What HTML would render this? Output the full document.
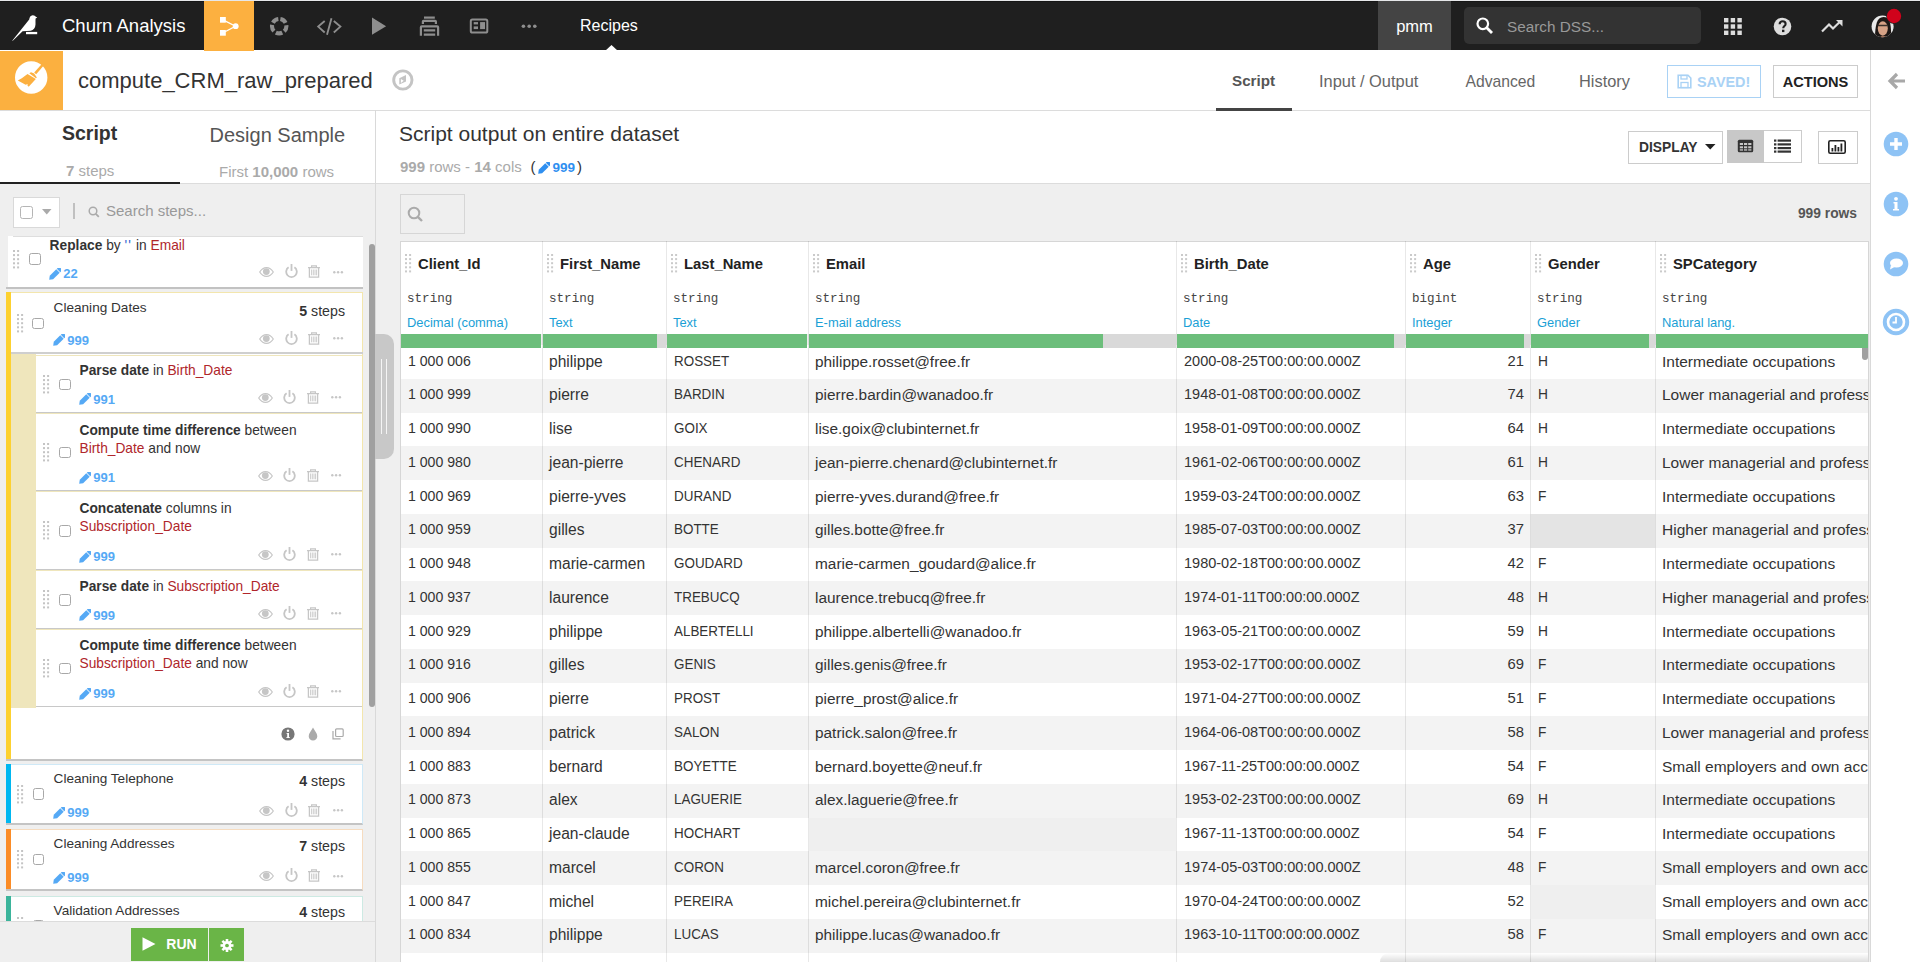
<!DOCTYPE html>
<html><head><meta charset="utf-8">
<style>
*{box-sizing:border-box;margin:0;padding:0}
html,body{width:1920px;height:962px;overflow:hidden;background:#fff;font-family:"Liberation Sans",sans-serif;color:#333}
.a{position:absolute}
.t{position:absolute;white-space:nowrap}
/* topbar */
#top{position:absolute;left:0;top:0;width:1920px;height:50px;background:#1f1f1f}
/* table */
.row{position:absolute;left:401px;width:1467px}
.cell{position:absolute;padding-left:6px;font-size:14.8px;color:#333;white-space:nowrap;overflow:hidden}
.cell.num{text-align:right;padding-right:6px;padding-left:0}
.hname{position:absolute;height:40px;line-height:44px;padding-left:18px;font-size:14.8px;font-weight:bold;color:#222;white-space:nowrap}
.grip{position:absolute;left:7px;top:14px;width:6px;height:18px;background-image:radial-gradient(circle,#c8c8c8 0.9px,transparent 1.1px);background-size:3px 3px}
.htype{position:absolute;font-family:"Liberation Mono",monospace;font-size:12.6px;color:#444;white-space:nowrap}
.hmean{position:absolute;font-size:12.9px;color:#1a9fd6;white-space:nowrap}
/* steps */
.card{position:absolute;background:#fff;border-bottom:2px solid #cfcfcf}
.drag{position:absolute;width:7px;height:19px;background-image:radial-gradient(circle,#c8c8c8 0.9px,transparent 1.1px);background-size:3.3px 3.3px}
.cb{position:absolute;width:11.5px;height:11.5px;border:1px solid #a8a8a8;border-radius:2.5px;background:#fff}
.stxt{position:absolute;font-size:14px;color:#333;white-space:nowrap;line-height:19px}
.stxt b{color:#333}
.col{color:#b0262b}
.pen{position:absolute;font-size:13.5px;font-weight:bold;color:#55a6f0;white-space:nowrap}
.acts{position:absolute;width:90px;height:14px}
.steps{position:absolute;font-size:14.5px;color:#333;white-space:nowrap}
</style></head><body>

<!-- TOPBAR -->
<div id="top"></div>
<div class="a" style="left:0;top:0;width:1920px;height:1px;background:#e6e7e9"></div>
<div class="a" style="left:0;top:1px;width:1920px;height:1px;background:#161616"></div>
<!-- bird logo -->
<svg class="a" style="left:8px;top:10px" width="36" height="34" viewBox="0 0 36 34">
<path d="M4.2 30.8 L21.2 9.6 C21.4 7.3 22.6 5.4 24.7 5.3 C26.2 5.2 27.3 6.1 27.8 6.7 L29.3 7.4 L27.6 8.5 C27.4 10.2 27.6 12 27.5 14.5 C27.3 18.2 25.4 20.3 22.8 20.8 L14.6 21.3 L4.8 30.8 Z" fill="#fff"/>
<rect x="18" y="21.9" width="11.2" height="2.3" fill="#fff"/>
</svg>
<div class="t" style="left:62px;top:14px;font-size:18.5px;color:#fff;line-height:24px">Churn Analysis</div>
<div class="a" style="left:204px;top:1px;width:50px;height:50px;background:#fcb040"></div>
<svg class="a" style="left:218px;top:15px" width="22" height="22" viewBox="0 0 22 22">
<rect x="2" y="2" width="5.8" height="5.7" fill="#fff"/><rect x="2" y="15" width="5.8" height="5.7" fill="#fff"/>
<circle cx="17.7" cy="11.2" r="2.9" fill="#fff"/>
<path d="M7 5.8 L17.5 11.2 L7 16.8" stroke="#fff" stroke-width="1.3" fill="none"/>
</svg>
<!-- nav icons -->
<svg class="a" style="left:269px;top:16px" width="21" height="21" viewBox="0 0 21 21">
<g transform="translate(10.2 10.2)"><circle r="7.2" stroke="#8e8e8e" stroke-width="4.1" fill="none" stroke-dasharray="6.65 2.4" stroke-dashoffset="7.85" transform="rotate(-90)"/></g>
</svg>
<svg class="a" style="left:316px;top:17px" width="26" height="20" viewBox="0 0 26 20">
<path d="M8.7 4 L2.2 9.6 L8.7 15.5 M17.8 4 L24.4 9.6 L17.8 15.5 M15.5 1.2 L11 17.8" stroke="#8e8e8e" stroke-width="1.85" fill="none"/>
</svg>
<svg class="a" style="left:372px;top:17px" width="15" height="19" viewBox="0 0 15 19"><path d="M0 0.5 L14.1 9.2 L0 17.8 Z" fill="#8e8e8e"/></svg>
<svg class="a" style="left:419px;top:16px" width="21" height="21" viewBox="0 0 21 21">
<g stroke="#8e8e8e" stroke-width="2.2" fill="none">
<path d="M5 1.6 H15.8"/>
<path d="M3.9 8 V5.5 Q3.9 4.8 4.6 4.8 H16.2 Q16.9 4.8 16.9 5.5 V8"/>
<path d="M1.9 19.8 V11.3 Q1.9 10.4 2.8 10.4 H18.2 Q19.1 10.4 19.1 11.3 V19.8"/>
<path d="M4.8 14.4 H16.2 M4.8 18.6 H16.2"/>
</g></svg>
<svg class="a" style="left:469px;top:18px" width="21" height="17" viewBox="0 0 21 17">
<rect x="1.8" y="1.6" width="16.5" height="13" rx="1.6" stroke="#8e8e8e" stroke-width="2" fill="none"/>
<g fill="#8e8e8e"><rect x="4.7" y="4.1" width="4.3" height="2.3"/><rect x="4.7" y="8.4" width="4.3" height="2.7"/><rect x="11.1" y="4.1" width="4.9" height="7"/></g>
</svg>
<svg class="a" style="left:521px;top:24px" width="17" height="5" viewBox="0 0 17 5">
<circle cx="2.4" cy="2.2" r="1.8" fill="#8e8e8e"/><circle cx="8.2" cy="2.2" r="1.8" fill="#8e8e8e"/><circle cx="13.8" cy="2.2" r="1.8" fill="#8e8e8e"/>
</svg>
<div class="t" style="left:580px;top:14px;font-size:16px;color:#fff;line-height:24px">Recipes</div>
<svg class="a" style="left:605px;top:45px" width="13" height="6" viewBox="0 0 13 6"><path d="M0 6 L6.5 0 L13 6 Z" fill="#fff"/></svg>
<!-- right topbar -->
<div class="a" style="left:1378px;top:1px;width:73px;height:49px;background:#444"></div>
<div class="t" style="left:1378px;top:14px;width:73px;text-align:center;font-size:16.5px;color:#fff;line-height:24px">pmm</div>
<div class="a" style="left:1464px;top:7px;width:237px;height:37px;background:#333;border-radius:5px"></div>
<svg class="a" style="left:1476px;top:17px" width="18" height="17" viewBox="0 0 18 17">
<circle cx="6.8" cy="6.8" r="5.3" stroke="#fff" stroke-width="2.2" fill="none"/><path d="M10.5 10.5 L16 16" stroke="#fff" stroke-width="2.8"/>
</svg>
<div class="t" style="left:1507px;top:15px;font-size:15.3px;color:#999;line-height:24px">Search DSS...</div>
<svg class="a" style="left:1724px;top:18px" width="18" height="17" viewBox="0 0 18 17">
<g fill="#ddd"><rect x="0" y="0" width="4.4" height="4.4"/><rect x="6.7" y="0" width="4.4" height="4.4"/><rect x="13.4" y="0" width="4.4" height="4.4"/>
<rect x="0" y="6.3" width="4.4" height="4.4"/><rect x="6.7" y="6.3" width="4.4" height="4.4"/><rect x="13.4" y="6.3" width="4.4" height="4.4"/>
<rect x="0" y="12.6" width="4.4" height="4.4"/><rect x="6.7" y="12.6" width="4.4" height="4.4"/><rect x="13.4" y="12.6" width="4.4" height="4.4"/></g>
</svg>
<svg class="a" style="left:1773px;top:17px" width="19" height="19" viewBox="0 0 19 19">
<circle cx="9.5" cy="9.5" r="8.8" fill="#ddd"/>
<path d="M6.6 7.3 C6.6 5.4 8 4.3 9.6 4.3 C11.3 4.3 12.6 5.4 12.6 6.9 C12.6 9 10.2 9.1 10.2 11.2" stroke="#1f1f1f" stroke-width="2.1" fill="none"/>
<rect x="9" y="12.7" width="2.4" height="2.4" fill="#1f1f1f"/>
</svg>
<svg class="a" style="left:1821px;top:19px" width="23" height="14" viewBox="0 0 23 14">
<path d="M1 12.5 L8 5.5 L12 9.5 L20 1.8" stroke="#ddd" stroke-width="2.2" fill="none"/><path d="M15 1 H21.5 V7.5 Z" fill="#ddd"/>
</svg>
<svg class="a" style="left:1866px;top:6px" width="40" height="36" viewBox="0 0 40 36">
<defs><clipPath id="av"><circle cx="16.5" cy="20.4" r="10.9"/></clipPath></defs>
<circle cx="16.5" cy="20.4" r="10.9" fill="#e9e9e9"/>
<g clip-path="url(#av)">
<path d="M9 33 C9 20 10.5 11 17.5 11 C24 11 25.5 18 25 33 Z" fill="#1d1715"/>
<ellipse cx="16.8" cy="22.5" rx="5" ry="7.2" fill="#d6a286"/>
<path d="M11.8 19.6 H22" stroke="#3b302b" stroke-width="1.5"/>
<path d="M13 32 C14 30 19 29.5 22 32 Z" fill="#c98d70"/>
<path d="M22 12 C25 14 27 20 26 33 L28 33 L28 10 Z" fill="#e6e6e6"/>
</g>
<circle cx="28" cy="10" r="7.9" fill="#1f1f1f"/>
<circle cx="28" cy="10" r="7.2" fill="#d0021b"/>
</svg>
<!-- HEADER 2 -->
<div class="a" style="left:0;top:110px;width:1870px;height:1px;background:#dcdcdc"></div>
<div class="a" style="left:0;top:51px;width:63px;height:59px;background:#fbb040"></div>
<svg class="a" style="left:10px;top:58px" width="42" height="40" viewBox="0 0 42 40">
<circle cx="21.2" cy="19.5" r="16.2" fill="#fff"/>
<path d="M33 6.5 L25.2 15.4" stroke="#fcb040" stroke-width="2.6"/>
<path d="M19.3 15.2 L21 14.2 L24.2 15.6 L26.8 19.6 L26 20.3 Z" fill="#fcb040"/>
<path d="M17.5 16.1 L25.8 21.1 L18.7 28.8 L17.3 27.3 L17.8 26 L15.6 26.8 L7.8 22.4 L11.8 20.3 Z" fill="#fcb040"/>
</svg>
<div class="t" style="left:78px;top:66px;font-size:22px;color:#333;line-height:30px">compute_CRM_raw_prepared</div>
<svg class="a" style="left:388px;top:66px" width="30" height="28" viewBox="0 0 30 28">
<circle cx="14.85" cy="14" r="9.15" stroke="#c4c4c4" stroke-width="2.9" fill="none"/>
<path d="M11.3 12.2 L18 9 L18 15.4 L11.3 18.6 Z M12.9 13.1 L12.9 16.9 L15.7 14.8 Z" fill="#c4c4c4" fill-rule="evenodd"/>
</svg>
<div class="t" style="left:1232px;top:69px;font-size:15.2px;font-weight:bold;color:#555;line-height:24px">Script</div>
<div class="a" style="left:1216px;top:108px;width:76px;height:3px;background:#444"></div>
<div class="t" style="left:1319px;top:69px;font-size:16.4px;color:#666;line-height:24px">Input / Output</div>
<div class="t" style="left:1465.5px;top:70.4px;font-size:15.7px;color:#666;line-height:24px">Advanced</div>
<div class="t" style="left:1579px;top:69px;font-size:16.4px;color:#666;line-height:24px">History</div>
<div class="a" style="left:1667px;top:65px;width:94px;height:33px;border:1px solid #a9d2f5"></div>
<svg class="a" style="left:1677px;top:74px" width="15" height="15" viewBox="0 0 15 15">
<path d="M1.2 1.2 H11 L13.8 4 V13.8 H1.2 Z" stroke="#a9d2f5" stroke-width="1.6" fill="none"/>
<rect x="4" y="1.5" width="6" height="3.5" stroke="#a9d2f5" stroke-width="1.3" fill="none"/>
<rect x="4" y="8.5" width="7" height="5" stroke="#a9d2f5" stroke-width="1.3" fill="none"/>
</svg>
<div class="t" style="left:1697px;top:70px;font-size:14.4px;font-weight:bold;color:#a9d2f5;line-height:24px">SAVED!</div>
<div class="a" style="left:1773px;top:65px;width:85px;height:33px;border:1px solid #ccc"></div>
<div class="t" style="left:1773px;top:70px;width:85px;text-align:center;font-size:14.6px;font-weight:bold;color:#222;line-height:24px">ACTIONS</div>

<!-- RIGHT SIDEBAR -->
<div class="a" style="left:1870px;top:50px;width:1px;height:912px;background:#d9d9d9"></div>
<svg class="a" style="left:1887px;top:71px" width="20" height="20" viewBox="0 0 20 20">
<path d="M10 3 L3 10 L10 17 M3.5 10 H18" stroke="#a8a8a8" stroke-width="3.2" fill="none" stroke-linejoin="miter"/>
</svg>
<svg class="a" style="left:1883px;top:131px" width="26" height="26" viewBox="0 0 26 26">
<circle cx="13" cy="13" r="12.3" fill="#8ec3f5"/><path d="M13 7 V19 M7 13 H19" stroke="#fff" stroke-width="3.4"/>
</svg>
<svg class="a" style="left:1883px;top:191px" width="26" height="26" viewBox="0 0 26 26">
<circle cx="13" cy="13" r="12.3" fill="#8ec3f5"/><circle cx="13" cy="7.8" r="1.9" fill="#fff"/><path d="M10.5 11 H14.5 V18 H16 V19.5 H10 V18 H11.5 V12.5 H10.5 Z" fill="#fff"/>
</svg>
<svg class="a" style="left:1883px;top:251px" width="26" height="26" viewBox="0 0 26 26">
<circle cx="13" cy="13" r="12.3" fill="#8ec3f5"/><ellipse cx="13.5" cy="12" rx="6.5" ry="4.5" fill="#fff"/><path d="M8 14 L7 18.5 L11.5 16 Z" fill="#fff"/>
</svg>
<svg class="a" style="left:1882px;top:308px" width="28" height="28" viewBox="0 0 28 28">
<circle cx="14" cy="14" r="13.2" fill="#8ec3f5"/><circle cx="14" cy="14" r="8" fill="none" stroke="#fff" stroke-width="2.6"/><path d="M14 9 V14.5 H10.5" stroke="#fff" stroke-width="1.8" fill="none"/>
</svg>

<!-- LEFT PANEL -->
<div class="a" style="left:375px;top:110px;width:1px;height:852px;background:#d9d9d9"></div>
<div class="t" style="left:62px;top:119px;font-size:19.5px;font-weight:bold;color:#333;line-height:28px">Script</div>
<div class="t" style="left:209.5px;top:120.6px;font-size:20px;color:#555;line-height:28px">Design Sample</div>
<div class="t" style="left:66px;top:159.6px;font-size:15px;color:#aaa;line-height:22px"><b>7</b> steps</div>
<div class="t" style="left:219px;top:160.6px;font-size:15px;color:#aaa;line-height:22px">First <b>10,000</b> rows</div>
<div class="a" style="left:0;top:183px;width:375px;height:1px;background:#dcdcdc"></div>
<div class="a" style="left:0;top:182px;width:180px;height:2px;background:#222"></div>
<div class="a" style="left:0;top:184px;width:375px;height:737px;background:#efefef"></div>

<div class="a" style="left:13px;top:196.5px;width:47px;height:31px;border:1px solid #d9d9d9;background:#fff"></div>
<div class="cb" style="left:20px;top:206px;width:13px;height:13px;border-color:#b5b5b5"></div>
<svg class="a" style="left:42px;top:209px" width="10" height="6" viewBox="0 0 10 6"><path d="M0 0 H9.5 L4.75 5.5 Z" fill="#aaa"/></svg>
<div class="a" style="left:73px;top:203px;width:2px;height:16px;background:#c0c0c0"></div>
<svg class="a" style="left:88px;top:206px" width="12" height="12" viewBox="0 0 12 12"><circle cx="5" cy="5" r="3.8" stroke="#aaa" stroke-width="1.5" fill="none"/><path d="M7.8 7.8 L10.8 10.8" stroke="#aaa" stroke-width="1.8"/></svg>
<div class="t" style="left:106.0px;top:202.5px;font-size:15px;line-height:15px;color:#999;">Search steps...</div>
<div class="a" style="left:0;top:236px;width:368px;height:685px;overflow:hidden">
<div class="a" style="left:8px;top:0px;width:354.5px;height:52.8px;background:#fff"></div>
<div class="a" style="left:13px;top:0px;width:350px;height:1px;background:#dedede"></div>
<div class="a" style="left:6px;top:51px;width:356.5px;height:1.8px;background:#c2c2c2"></div>
<svg class="a" style="left:13px;top:13.599999999999994px" width="7" height="19" viewBox="0 0 7 19"><g fill="#c4c4c4"><rect x="0" y="0.0" width="2" height="2"/><rect x="4.1" y="0.0" width="2" height="2"/><rect x="0" y="4.1" width="2" height="2"/><rect x="4.1" y="4.1" width="2" height="2"/><rect x="0" y="8.2" width="2" height="2"/><rect x="4.1" y="8.2" width="2" height="2"/><rect x="0" y="12.3" width="2" height="2"/><rect x="4.1" y="12.3" width="2" height="2"/><rect x="0" y="16.4" width="2" height="2"/><rect x="4.1" y="16.4" width="2" height="2"/></g></svg>
<div class="cb" style="left:29px;top:17.30000000000001px"></div>
<div class="t" style="left:49.6px;top:2.7px;font-size:13.75px;line-height:13.75px;color:#333;"><b>Replace</b> by <span style='color:#2f62d0;letter-spacing:1.2px'>''</span> in <span class='col'>Email</span></div>
<svg class="a" style="left:49px;top:31.8px" width="12" height="12" viewBox="0 0 12 12"><g transform="translate(6 6) rotate(-45)"><path d="M-8.2 0 L-5 -2.4 H4.2 V2.4 H-5 Z" fill="#55a9f5"/><path d="M5 -2.4 H7.2 Q8.2 -2.4 8.2 -1.4 V1.4 Q8.2 2.4 7.2 2.4 H5 Z" fill="#55a9f5"/></g></svg><div class="t" style="left:63.3px;top:31.3px;font-size:13px;line-height:13px;color:#55a9f5;font-weight:bold;">22</div>
<svg class="a" style="left:259px;top:31.399999999999977px" width="15" height="10" viewBox="0 0 15 10"><path d="M0.7 5 C2.8 1.6 5 0.6 7.5 0.6 C10 0.6 12.2 1.6 14.3 5 C12.2 8.4 10 9.4 7.5 9.4 C5 9.4 2.8 8.4 0.7 5 Z" stroke="#c6c6c6" stroke-width="1.2" fill="none"/><circle cx="7.3" cy="4.6" r="3.4" fill="#c6c6c6"/></svg><svg class="a" style="left:284.5px;top:28.399999999999977px" width="13" height="14" viewBox="0 0 13 14"><path d="M3.6 3.3 A5.3 5.3 0 1 0 9.4 3.3" stroke="#c6c6c6" stroke-width="1.8" fill="none"/><path d="M6.5 0 V6.9" stroke="#c6c6c6" stroke-width="1.8"/></svg><svg class="a" style="left:308.2px;top:29.399999999999977px" width="12" height="13" viewBox="0 0 12 13"><path d="M0 2.6 H12 M3.6 2.4 V0.8 H8.4 V2.4" stroke="#c6c6c6" stroke-width="1.2" fill="none"/><path d="M1.4 3 V12.2 H10.6 V3" stroke="#c6c6c6" stroke-width="1.3" fill="none"/><path d="M3.6 4.5 V10.3 M5.3 4.5 V10.3 M7 4.5 V10.3 M8.6 4.5 V10.3" stroke="#c6c6c6" stroke-width="0.9"/></svg><svg class="a" style="left:332.7px;top:34.99999999999998px" width="11" height="3" viewBox="0 0 11 3"><circle cx="1.3" cy="1.3" r="1.2" fill="#c6c6c6"/><circle cx="5.1" cy="1.3" r="1.2" fill="#c6c6c6"/><circle cx="8.9" cy="1.3" r="1.2" fill="#c6c6c6"/></svg>
<div class="a" style="left:6px;top:56.30000000000001px;width:357px;height:468.7px;background:#fff;border:1px solid #f3e6ad;border-left:none;border-bottom:2px solid #c4c4c4"></div>
<div class="a" style="left:6px;top:56.30000000000001px;width:5px;height:466.7px;background:#fdd130"></div>
<div class="a" style="left:11px;top:116px;width:352px;height:2px;background:#cfcfcf"></div>
<div class="t" style="left:53.6px;top:64.7px;font-size:13.6px;line-height:13.6px;color:#333;">Cleaning Dates</div>
<div class="t" style="left:245.0px;top:67.6px;font-size:14.2px;line-height:14.2px;color:#333;width:100px;text-align:right"><b>5</b> steps</div>
<svg class="a" style="left:16.8px;top:77.80000000000001px" width="7" height="19" viewBox="0 0 7 19"><g fill="#c4c4c4"><rect x="0" y="0.0" width="2" height="2"/><rect x="4.1" y="0.0" width="2" height="2"/><rect x="0" y="4.1" width="2" height="2"/><rect x="4.1" y="4.1" width="2" height="2"/><rect x="0" y="8.2" width="2" height="2"/><rect x="4.1" y="8.2" width="2" height="2"/><rect x="0" y="12.3" width="2" height="2"/><rect x="4.1" y="12.3" width="2" height="2"/><rect x="0" y="16.4" width="2" height="2"/><rect x="4.1" y="16.4" width="2" height="2"/></g></svg>
<div class="cb" style="left:32.4px;top:81.5px"></div>
<svg class="a" style="left:53px;top:98.10000000000001px" width="12" height="12" viewBox="0 0 12 12"><g transform="translate(6 6) rotate(-45)"><path d="M-8.2 0 L-5 -2.4 H4.2 V2.4 H-5 Z" fill="#55a9f5"/><path d="M5 -2.4 H7.2 Q8.2 -2.4 8.2 -1.4 V1.4 Q8.2 2.4 7.2 2.4 H5 Z" fill="#55a9f5"/></g></svg><div class="t" style="left:67.3px;top:97.6px;font-size:13px;line-height:13px;color:#55a9f5;font-weight:bold;">999</div>
<svg class="a" style="left:259px;top:97.60000000000002px" width="15" height="10" viewBox="0 0 15 10"><path d="M0.7 5 C2.8 1.6 5 0.6 7.5 0.6 C10 0.6 12.2 1.6 14.3 5 C12.2 8.4 10 9.4 7.5 9.4 C5 9.4 2.8 8.4 0.7 5 Z" stroke="#c6c6c6" stroke-width="1.2" fill="none"/><circle cx="7.3" cy="4.6" r="3.4" fill="#c6c6c6"/></svg><svg class="a" style="left:284.5px;top:94.60000000000002px" width="13" height="14" viewBox="0 0 13 14"><path d="M3.6 3.3 A5.3 5.3 0 1 0 9.4 3.3" stroke="#c6c6c6" stroke-width="1.8" fill="none"/><path d="M6.5 0 V6.9" stroke="#c6c6c6" stroke-width="1.8"/></svg><svg class="a" style="left:308.2px;top:95.60000000000002px" width="12" height="13" viewBox="0 0 12 13"><path d="M0 2.6 H12 M3.6 2.4 V0.8 H8.4 V2.4" stroke="#c6c6c6" stroke-width="1.2" fill="none"/><path d="M1.4 3 V12.2 H10.6 V3" stroke="#c6c6c6" stroke-width="1.3" fill="none"/><path d="M3.6 4.5 V10.3 M5.3 4.5 V10.3 M7 4.5 V10.3 M8.6 4.5 V10.3" stroke="#c6c6c6" stroke-width="0.9"/></svg><svg class="a" style="left:332.7px;top:101.20000000000002px" width="11" height="3" viewBox="0 0 11 3"><circle cx="1.3" cy="1.3" r="1.2" fill="#c6c6c6"/><circle cx="5.1" cy="1.3" r="1.2" fill="#c6c6c6"/><circle cx="8.9" cy="1.3" r="1.2" fill="#c6c6c6"/></svg>
<div class="a" style="left:11px;top:118px;width:25px;height:353.5px;background:#efe6bc"></div>
<div class="a" style="left:36px;top:119px;width:326px;height:58px;background:#fff;border-top:1px solid #efe6bc;border-bottom:1.8px solid #c8c8c8"></div>
<div class="t" style="left:79.5px;top:127.8px;font-size:13.75px;line-height:13.75px;color:#333;"><b>Parse date</b> in <span class='col'>Birth_Date</span></div>
<svg class="a" style="left:79px;top:157.3px" width="12" height="12" viewBox="0 0 12 12"><g transform="translate(6 6) rotate(-45)"><path d="M-8.2 0 L-5 -2.4 H4.2 V2.4 H-5 Z" fill="#55a9f5"/><path d="M5 -2.4 H7.2 Q8.2 -2.4 8.2 -1.4 V1.4 Q8.2 2.4 7.2 2.4 H5 Z" fill="#55a9f5"/></g></svg><div class="t" style="left:93.3px;top:156.8px;font-size:13px;line-height:13px;color:#55a9f5;font-weight:bold;">991</div>
<svg class="a" style="left:43px;top:138.5px" width="7" height="19" viewBox="0 0 7 19"><g fill="#c4c4c4"><rect x="0" y="0.0" width="2" height="2"/><rect x="4.1" y="0.0" width="2" height="2"/><rect x="0" y="4.1" width="2" height="2"/><rect x="4.1" y="4.1" width="2" height="2"/><rect x="0" y="8.2" width="2" height="2"/><rect x="4.1" y="8.2" width="2" height="2"/><rect x="0" y="12.3" width="2" height="2"/><rect x="4.1" y="12.3" width="2" height="2"/><rect x="0" y="16.4" width="2" height="2"/><rect x="4.1" y="16.4" width="2" height="2"/></g></svg>
<div class="cb" style="left:59px;top:142.5px"></div>
<svg class="a" style="left:257.6px;top:156.5px" width="15" height="10" viewBox="0 0 15 10"><path d="M0.7 5 C2.8 1.6 5 0.6 7.5 0.6 C10 0.6 12.2 1.6 14.3 5 C12.2 8.4 10 9.4 7.5 9.4 C5 9.4 2.8 8.4 0.7 5 Z" stroke="#c6c6c6" stroke-width="1.2" fill="none"/><circle cx="7.3" cy="4.6" r="3.4" fill="#c6c6c6"/></svg><svg class="a" style="left:283.1px;top:153.5px" width="13" height="14" viewBox="0 0 13 14"><path d="M3.6 3.3 A5.3 5.3 0 1 0 9.4 3.3" stroke="#c6c6c6" stroke-width="1.8" fill="none"/><path d="M6.5 0 V6.9" stroke="#c6c6c6" stroke-width="1.8"/></svg><svg class="a" style="left:306.8px;top:154.5px" width="12" height="13" viewBox="0 0 12 13"><path d="M0 2.6 H12 M3.6 2.4 V0.8 H8.4 V2.4" stroke="#c6c6c6" stroke-width="1.2" fill="none"/><path d="M1.4 3 V12.2 H10.6 V3" stroke="#c6c6c6" stroke-width="1.3" fill="none"/><path d="M3.6 4.5 V10.3 M5.3 4.5 V10.3 M7 4.5 V10.3 M8.6 4.5 V10.3" stroke="#c6c6c6" stroke-width="0.9"/></svg><svg class="a" style="left:331.3px;top:160.1px" width="11" height="3" viewBox="0 0 11 3"><circle cx="1.3" cy="1.3" r="1.2" fill="#c6c6c6"/><circle cx="5.1" cy="1.3" r="1.2" fill="#c6c6c6"/><circle cx="8.9" cy="1.3" r="1.2" fill="#c6c6c6"/></svg>
<div class="a" style="left:36px;top:177px;width:326px;height:78px;background:#fff;border-top:1px solid #efe6bc;border-bottom:1.8px solid #c8c8c8"></div>
<div class="t" style="left:79.5px;top:187.6px;font-size:13.75px;line-height:13.75px;color:#333;"><b>Compute time difference</b> between</div>
<div class="t" style="left:79.5px;top:206.4px;font-size:13.75px;line-height:13.75px;color:#333;"><span class='col'>Birth_Date</span> and now</div>
<svg class="a" style="left:79px;top:235.8px" width="12" height="12" viewBox="0 0 12 12"><g transform="translate(6 6) rotate(-45)"><path d="M-8.2 0 L-5 -2.4 H4.2 V2.4 H-5 Z" fill="#55a9f5"/><path d="M5 -2.4 H7.2 Q8.2 -2.4 8.2 -1.4 V1.4 Q8.2 2.4 7.2 2.4 H5 Z" fill="#55a9f5"/></g></svg><div class="t" style="left:93.3px;top:235.3px;font-size:13px;line-height:13px;color:#55a9f5;font-weight:bold;">991</div>
<svg class="a" style="left:43px;top:206.5px" width="7" height="19" viewBox="0 0 7 19"><g fill="#c4c4c4"><rect x="0" y="0.0" width="2" height="2"/><rect x="4.1" y="0.0" width="2" height="2"/><rect x="0" y="4.1" width="2" height="2"/><rect x="4.1" y="4.1" width="2" height="2"/><rect x="0" y="8.2" width="2" height="2"/><rect x="4.1" y="8.2" width="2" height="2"/><rect x="0" y="12.3" width="2" height="2"/><rect x="4.1" y="12.3" width="2" height="2"/><rect x="0" y="16.4" width="2" height="2"/><rect x="4.1" y="16.4" width="2" height="2"/></g></svg>
<div class="cb" style="left:59px;top:210.5px"></div>
<svg class="a" style="left:257.6px;top:234.5px" width="15" height="10" viewBox="0 0 15 10"><path d="M0.7 5 C2.8 1.6 5 0.6 7.5 0.6 C10 0.6 12.2 1.6 14.3 5 C12.2 8.4 10 9.4 7.5 9.4 C5 9.4 2.8 8.4 0.7 5 Z" stroke="#c6c6c6" stroke-width="1.2" fill="none"/><circle cx="7.3" cy="4.6" r="3.4" fill="#c6c6c6"/></svg><svg class="a" style="left:283.1px;top:231.5px" width="13" height="14" viewBox="0 0 13 14"><path d="M3.6 3.3 A5.3 5.3 0 1 0 9.4 3.3" stroke="#c6c6c6" stroke-width="1.8" fill="none"/><path d="M6.5 0 V6.9" stroke="#c6c6c6" stroke-width="1.8"/></svg><svg class="a" style="left:306.8px;top:232.5px" width="12" height="13" viewBox="0 0 12 13"><path d="M0 2.6 H12 M3.6 2.4 V0.8 H8.4 V2.4" stroke="#c6c6c6" stroke-width="1.2" fill="none"/><path d="M1.4 3 V12.2 H10.6 V3" stroke="#c6c6c6" stroke-width="1.3" fill="none"/><path d="M3.6 4.5 V10.3 M5.3 4.5 V10.3 M7 4.5 V10.3 M8.6 4.5 V10.3" stroke="#c6c6c6" stroke-width="0.9"/></svg><svg class="a" style="left:331.3px;top:238.1px" width="11" height="3" viewBox="0 0 11 3"><circle cx="1.3" cy="1.3" r="1.2" fill="#c6c6c6"/><circle cx="5.1" cy="1.3" r="1.2" fill="#c6c6c6"/><circle cx="8.9" cy="1.3" r="1.2" fill="#c6c6c6"/></svg>
<div class="a" style="left:36px;top:255px;width:326px;height:79px;background:#fff;border-top:1px solid #efe6bc;border-bottom:1.8px solid #c8c8c8"></div>
<div class="t" style="left:79.5px;top:265.6px;font-size:13.75px;line-height:13.75px;color:#333;"><b>Concatenate</b> columns in</div>
<div class="t" style="left:79.5px;top:284.4px;font-size:13.75px;line-height:13.75px;color:#333;"><span class='col'>Subscription_Date</span></div>
<svg class="a" style="left:79px;top:314.8px" width="12" height="12" viewBox="0 0 12 12"><g transform="translate(6 6) rotate(-45)"><path d="M-8.2 0 L-5 -2.4 H4.2 V2.4 H-5 Z" fill="#55a9f5"/><path d="M5 -2.4 H7.2 Q8.2 -2.4 8.2 -1.4 V1.4 Q8.2 2.4 7.2 2.4 H5 Z" fill="#55a9f5"/></g></svg><div class="t" style="left:93.3px;top:314.3px;font-size:13px;line-height:13px;color:#55a9f5;font-weight:bold;">999</div>
<svg class="a" style="left:43px;top:285.0px" width="7" height="19" viewBox="0 0 7 19"><g fill="#c4c4c4"><rect x="0" y="0.0" width="2" height="2"/><rect x="4.1" y="0.0" width="2" height="2"/><rect x="0" y="4.1" width="2" height="2"/><rect x="4.1" y="4.1" width="2" height="2"/><rect x="0" y="8.2" width="2" height="2"/><rect x="4.1" y="8.2" width="2" height="2"/><rect x="0" y="12.3" width="2" height="2"/><rect x="4.1" y="12.3" width="2" height="2"/><rect x="0" y="16.4" width="2" height="2"/><rect x="4.1" y="16.4" width="2" height="2"/></g></svg>
<div class="cb" style="left:59px;top:289.0px"></div>
<svg class="a" style="left:257.6px;top:313.5px" width="15" height="10" viewBox="0 0 15 10"><path d="M0.7 5 C2.8 1.6 5 0.6 7.5 0.6 C10 0.6 12.2 1.6 14.3 5 C12.2 8.4 10 9.4 7.5 9.4 C5 9.4 2.8 8.4 0.7 5 Z" stroke="#c6c6c6" stroke-width="1.2" fill="none"/><circle cx="7.3" cy="4.6" r="3.4" fill="#c6c6c6"/></svg><svg class="a" style="left:283.1px;top:310.5px" width="13" height="14" viewBox="0 0 13 14"><path d="M3.6 3.3 A5.3 5.3 0 1 0 9.4 3.3" stroke="#c6c6c6" stroke-width="1.8" fill="none"/><path d="M6.5 0 V6.9" stroke="#c6c6c6" stroke-width="1.8"/></svg><svg class="a" style="left:306.8px;top:311.5px" width="12" height="13" viewBox="0 0 12 13"><path d="M0 2.6 H12 M3.6 2.4 V0.8 H8.4 V2.4" stroke="#c6c6c6" stroke-width="1.2" fill="none"/><path d="M1.4 3 V12.2 H10.6 V3" stroke="#c6c6c6" stroke-width="1.3" fill="none"/><path d="M3.6 4.5 V10.3 M5.3 4.5 V10.3 M7 4.5 V10.3 M8.6 4.5 V10.3" stroke="#c6c6c6" stroke-width="0.9"/></svg><svg class="a" style="left:331.3px;top:317.1px" width="11" height="3" viewBox="0 0 11 3"><circle cx="1.3" cy="1.3" r="1.2" fill="#c6c6c6"/><circle cx="5.1" cy="1.3" r="1.2" fill="#c6c6c6"/><circle cx="8.9" cy="1.3" r="1.2" fill="#c6c6c6"/></svg>
<div class="a" style="left:36px;top:334px;width:326px;height:59px;background:#fff;border-top:1px solid #efe6bc;border-bottom:1.8px solid #c8c8c8"></div>
<div class="t" style="left:79.5px;top:343.6px;font-size:13.75px;line-height:13.75px;color:#333;"><b>Parse date</b> in <span class='col'>Subscription_Date</span></div>
<svg class="a" style="left:79px;top:373.3px" width="12" height="12" viewBox="0 0 12 12"><g transform="translate(6 6) rotate(-45)"><path d="M-8.2 0 L-5 -2.4 H4.2 V2.4 H-5 Z" fill="#55a9f5"/><path d="M5 -2.4 H7.2 Q8.2 -2.4 8.2 -1.4 V1.4 Q8.2 2.4 7.2 2.4 H5 Z" fill="#55a9f5"/></g></svg><div class="t" style="left:93.3px;top:372.8px;font-size:13px;line-height:13px;color:#55a9f5;font-weight:bold;">999</div>
<svg class="a" style="left:43px;top:354.0px" width="7" height="19" viewBox="0 0 7 19"><g fill="#c4c4c4"><rect x="0" y="0.0" width="2" height="2"/><rect x="4.1" y="0.0" width="2" height="2"/><rect x="0" y="4.1" width="2" height="2"/><rect x="4.1" y="4.1" width="2" height="2"/><rect x="0" y="8.2" width="2" height="2"/><rect x="4.1" y="8.2" width="2" height="2"/><rect x="0" y="12.3" width="2" height="2"/><rect x="4.1" y="12.3" width="2" height="2"/><rect x="0" y="16.4" width="2" height="2"/><rect x="4.1" y="16.4" width="2" height="2"/></g></svg>
<div class="cb" style="left:59px;top:358.0px"></div>
<svg class="a" style="left:257.6px;top:372.5px" width="15" height="10" viewBox="0 0 15 10"><path d="M0.7 5 C2.8 1.6 5 0.6 7.5 0.6 C10 0.6 12.2 1.6 14.3 5 C12.2 8.4 10 9.4 7.5 9.4 C5 9.4 2.8 8.4 0.7 5 Z" stroke="#c6c6c6" stroke-width="1.2" fill="none"/><circle cx="7.3" cy="4.6" r="3.4" fill="#c6c6c6"/></svg><svg class="a" style="left:283.1px;top:369.5px" width="13" height="14" viewBox="0 0 13 14"><path d="M3.6 3.3 A5.3 5.3 0 1 0 9.4 3.3" stroke="#c6c6c6" stroke-width="1.8" fill="none"/><path d="M6.5 0 V6.9" stroke="#c6c6c6" stroke-width="1.8"/></svg><svg class="a" style="left:306.8px;top:370.5px" width="12" height="13" viewBox="0 0 12 13"><path d="M0 2.6 H12 M3.6 2.4 V0.8 H8.4 V2.4" stroke="#c6c6c6" stroke-width="1.2" fill="none"/><path d="M1.4 3 V12.2 H10.6 V3" stroke="#c6c6c6" stroke-width="1.3" fill="none"/><path d="M3.6 4.5 V10.3 M5.3 4.5 V10.3 M7 4.5 V10.3 M8.6 4.5 V10.3" stroke="#c6c6c6" stroke-width="0.9"/></svg><svg class="a" style="left:331.3px;top:376.1px" width="11" height="3" viewBox="0 0 11 3"><circle cx="1.3" cy="1.3" r="1.2" fill="#c6c6c6"/><circle cx="5.1" cy="1.3" r="1.2" fill="#c6c6c6"/><circle cx="8.9" cy="1.3" r="1.2" fill="#c6c6c6"/></svg>
<div class="a" style="left:36px;top:393px;width:326px;height:78px;background:#fff;border-top:1px solid #efe6bc;border-bottom:1.8px solid #c8c8c8"></div>
<div class="t" style="left:79.5px;top:402.6px;font-size:13.75px;line-height:13.75px;color:#333;"><b>Compute time difference</b> between</div>
<div class="t" style="left:79.5px;top:421.3px;font-size:13.75px;line-height:13.75px;color:#333;"><span class='col'>Subscription_Date</span> and now</div>
<svg class="a" style="left:79px;top:451.8px" width="12" height="12" viewBox="0 0 12 12"><g transform="translate(6 6) rotate(-45)"><path d="M-8.2 0 L-5 -2.4 H4.2 V2.4 H-5 Z" fill="#55a9f5"/><path d="M5 -2.4 H7.2 Q8.2 -2.4 8.2 -1.4 V1.4 Q8.2 2.4 7.2 2.4 H5 Z" fill="#55a9f5"/></g></svg><div class="t" style="left:93.3px;top:451.3px;font-size:13px;line-height:13px;color:#55a9f5;font-weight:bold;">999</div>
<svg class="a" style="left:43px;top:422.5px" width="7" height="19" viewBox="0 0 7 19"><g fill="#c4c4c4"><rect x="0" y="0.0" width="2" height="2"/><rect x="4.1" y="0.0" width="2" height="2"/><rect x="0" y="4.1" width="2" height="2"/><rect x="4.1" y="4.1" width="2" height="2"/><rect x="0" y="8.2" width="2" height="2"/><rect x="4.1" y="8.2" width="2" height="2"/><rect x="0" y="12.3" width="2" height="2"/><rect x="4.1" y="12.3" width="2" height="2"/><rect x="0" y="16.4" width="2" height="2"/><rect x="4.1" y="16.4" width="2" height="2"/></g></svg>
<div class="cb" style="left:59px;top:426.5px"></div>
<svg class="a" style="left:257.6px;top:450.5px" width="15" height="10" viewBox="0 0 15 10"><path d="M0.7 5 C2.8 1.6 5 0.6 7.5 0.6 C10 0.6 12.2 1.6 14.3 5 C12.2 8.4 10 9.4 7.5 9.4 C5 9.4 2.8 8.4 0.7 5 Z" stroke="#c6c6c6" stroke-width="1.2" fill="none"/><circle cx="7.3" cy="4.6" r="3.4" fill="#c6c6c6"/></svg><svg class="a" style="left:283.1px;top:447.5px" width="13" height="14" viewBox="0 0 13 14"><path d="M3.6 3.3 A5.3 5.3 0 1 0 9.4 3.3" stroke="#c6c6c6" stroke-width="1.8" fill="none"/><path d="M6.5 0 V6.9" stroke="#c6c6c6" stroke-width="1.8"/></svg><svg class="a" style="left:306.8px;top:448.5px" width="12" height="13" viewBox="0 0 12 13"><path d="M0 2.6 H12 M3.6 2.4 V0.8 H8.4 V2.4" stroke="#c6c6c6" stroke-width="1.2" fill="none"/><path d="M1.4 3 V12.2 H10.6 V3" stroke="#c6c6c6" stroke-width="1.3" fill="none"/><path d="M3.6 4.5 V10.3 M5.3 4.5 V10.3 M7 4.5 V10.3 M8.6 4.5 V10.3" stroke="#c6c6c6" stroke-width="0.9"/></svg><svg class="a" style="left:331.3px;top:454.1px" width="11" height="3" viewBox="0 0 11 3"><circle cx="1.3" cy="1.3" r="1.2" fill="#c6c6c6"/><circle cx="5.1" cy="1.3" r="1.2" fill="#c6c6c6"/><circle cx="8.9" cy="1.3" r="1.2" fill="#c6c6c6"/></svg>
<svg class="a" style="left:281px;top:491px" width="14" height="14" viewBox="0 0 14 14"><circle cx="7" cy="7" r="6.6" fill="#777"/><circle cx="7" cy="3.8" r="1.2" fill="#fff"/><path d="M5.5 6 H8 V10.2 H9 V11 H5.3 V10.2 H6.2 V6.8 H5.5 Z" fill="#fff"/></svg>
<svg class="a" style="left:307.5px;top:490.5px" width="10" height="14" viewBox="0 0 10 14"><path d="M5 0.5 C6.5 3.5 9.3 6.5 9.3 9.2 C9.3 11.7 7.4 13.5 5 13.5 C2.6 13.5 0.7 11.7 0.7 9.2 C0.7 6.5 3.5 3.5 5 0.5 Z" fill="#aaa"/></svg>
<svg class="a" style="left:332px;top:491.5px" width="12" height="12" viewBox="0 0 12 12"><rect x="3.6" y="0.9" width="7.6" height="7.6" rx="1" stroke="#aaa" stroke-width="1.2" fill="none"/><path d="M1 3 V10.9 H8.6" stroke="#aaa" stroke-width="1.2" fill="none"/></svg>
<div class="a" style="left:6px;top:528px;width:357px;height:61px;background:#fff;border:1px solid #cfe9f7;border-left:none;border-bottom:2px solid #c4c4c4"></div>
<div class="a" style="left:6px;top:528px;width:5px;height:59px;background:#00b7f1"></div>
<div class="t" style="left:53.6px;top:536.2px;font-size:13.6px;line-height:13.6px;color:#333;">Cleaning Telephone</div>
<div class="t" style="left:245.0px;top:537.6px;font-size:14.2px;line-height:14.2px;color:#333;width:100px;text-align:right"><b>4</b> steps</div>
<svg class="a" style="left:17px;top:548.8px" width="7" height="19" viewBox="0 0 7 19"><g fill="#c4c4c4"><rect x="0" y="0.0" width="2" height="2"/><rect x="4.1" y="0.0" width="2" height="2"/><rect x="0" y="4.1" width="2" height="2"/><rect x="4.1" y="4.1" width="2" height="2"/><rect x="0" y="8.2" width="2" height="2"/><rect x="4.1" y="8.2" width="2" height="2"/><rect x="0" y="12.3" width="2" height="2"/><rect x="4.1" y="12.3" width="2" height="2"/><rect x="0" y="16.4" width="2" height="2"/><rect x="4.1" y="16.4" width="2" height="2"/></g></svg>
<div class="cb" style="left:32.5px;top:552.4px"></div>
<svg class="a" style="left:53px;top:570.5999999999999px" width="12" height="12" viewBox="0 0 12 12"><g transform="translate(6 6) rotate(-45)"><path d="M-8.2 0 L-5 -2.4 H4.2 V2.4 H-5 Z" fill="#55a9f5"/><path d="M5 -2.4 H7.2 Q8.2 -2.4 8.2 -1.4 V1.4 Q8.2 2.4 7.2 2.4 H5 Z" fill="#55a9f5"/></g></svg><div class="t" style="left:67.3px;top:570.1px;font-size:13px;line-height:13px;color:#55a9f5;font-weight:bold;">999</div>
<svg class="a" style="left:259px;top:569.7px" width="15" height="10" viewBox="0 0 15 10"><path d="M0.7 5 C2.8 1.6 5 0.6 7.5 0.6 C10 0.6 12.2 1.6 14.3 5 C12.2 8.4 10 9.4 7.5 9.4 C5 9.4 2.8 8.4 0.7 5 Z" stroke="#c6c6c6" stroke-width="1.2" fill="none"/><circle cx="7.3" cy="4.6" r="3.4" fill="#c6c6c6"/></svg><svg class="a" style="left:284.5px;top:566.7px" width="13" height="14" viewBox="0 0 13 14"><path d="M3.6 3.3 A5.3 5.3 0 1 0 9.4 3.3" stroke="#c6c6c6" stroke-width="1.8" fill="none"/><path d="M6.5 0 V6.9" stroke="#c6c6c6" stroke-width="1.8"/></svg><svg class="a" style="left:308.2px;top:567.7px" width="12" height="13" viewBox="0 0 12 13"><path d="M0 2.6 H12 M3.6 2.4 V0.8 H8.4 V2.4" stroke="#c6c6c6" stroke-width="1.2" fill="none"/><path d="M1.4 3 V12.2 H10.6 V3" stroke="#c6c6c6" stroke-width="1.3" fill="none"/><path d="M3.6 4.5 V10.3 M5.3 4.5 V10.3 M7 4.5 V10.3 M8.6 4.5 V10.3" stroke="#c6c6c6" stroke-width="0.9"/></svg><svg class="a" style="left:332.7px;top:573.3000000000001px" width="11" height="3" viewBox="0 0 11 3"><circle cx="1.3" cy="1.3" r="1.2" fill="#c6c6c6"/><circle cx="5.1" cy="1.3" r="1.2" fill="#c6c6c6"/><circle cx="8.9" cy="1.3" r="1.2" fill="#c6c6c6"/></svg>
<div class="a" style="left:6px;top:593.2px;width:357px;height:61.799999999999955px;background:#fff;border:1px solid #f6dcc0;border-left:none;border-bottom:2px solid #c4c4c4"></div>
<div class="a" style="left:6px;top:593.2px;width:5px;height:59.799999999999955px;background:#fb8c27"></div>
<div class="t" style="left:53.6px;top:601.4px;font-size:13.6px;line-height:13.6px;color:#333;">Cleaning Addresses</div>
<div class="t" style="left:245.0px;top:602.8px;font-size:14.2px;line-height:14.2px;color:#333;width:100px;text-align:right"><b>7</b> steps</div>
<svg class="a" style="left:17px;top:614.0px" width="7" height="19" viewBox="0 0 7 19"><g fill="#c4c4c4"><rect x="0" y="0.0" width="2" height="2"/><rect x="4.1" y="0.0" width="2" height="2"/><rect x="0" y="4.1" width="2" height="2"/><rect x="4.1" y="4.1" width="2" height="2"/><rect x="0" y="8.2" width="2" height="2"/><rect x="4.1" y="8.2" width="2" height="2"/><rect x="0" y="12.3" width="2" height="2"/><rect x="4.1" y="12.3" width="2" height="2"/><rect x="0" y="16.4" width="2" height="2"/><rect x="4.1" y="16.4" width="2" height="2"/></g></svg>
<div class="cb" style="left:32.5px;top:617.6px"></div>
<svg class="a" style="left:53px;top:635.8px" width="12" height="12" viewBox="0 0 12 12"><g transform="translate(6 6) rotate(-45)"><path d="M-8.2 0 L-5 -2.4 H4.2 V2.4 H-5 Z" fill="#55a9f5"/><path d="M5 -2.4 H7.2 Q8.2 -2.4 8.2 -1.4 V1.4 Q8.2 2.4 7.2 2.4 H5 Z" fill="#55a9f5"/></g></svg><div class="t" style="left:67.3px;top:635.3px;font-size:13px;line-height:13px;color:#55a9f5;font-weight:bold;">999</div>
<svg class="a" style="left:259px;top:634.9000000000001px" width="15" height="10" viewBox="0 0 15 10"><path d="M0.7 5 C2.8 1.6 5 0.6 7.5 0.6 C10 0.6 12.2 1.6 14.3 5 C12.2 8.4 10 9.4 7.5 9.4 C5 9.4 2.8 8.4 0.7 5 Z" stroke="#c6c6c6" stroke-width="1.2" fill="none"/><circle cx="7.3" cy="4.6" r="3.4" fill="#c6c6c6"/></svg><svg class="a" style="left:284.5px;top:631.9000000000001px" width="13" height="14" viewBox="0 0 13 14"><path d="M3.6 3.3 A5.3 5.3 0 1 0 9.4 3.3" stroke="#c6c6c6" stroke-width="1.8" fill="none"/><path d="M6.5 0 V6.9" stroke="#c6c6c6" stroke-width="1.8"/></svg><svg class="a" style="left:308.2px;top:632.9000000000001px" width="12" height="13" viewBox="0 0 12 13"><path d="M0 2.6 H12 M3.6 2.4 V0.8 H8.4 V2.4" stroke="#c6c6c6" stroke-width="1.2" fill="none"/><path d="M1.4 3 V12.2 H10.6 V3" stroke="#c6c6c6" stroke-width="1.3" fill="none"/><path d="M3.6 4.5 V10.3 M5.3 4.5 V10.3 M7 4.5 V10.3 M8.6 4.5 V10.3" stroke="#c6c6c6" stroke-width="0.9"/></svg><svg class="a" style="left:332.7px;top:638.5000000000001px" width="11" height="3" viewBox="0 0 11 3"><circle cx="1.3" cy="1.3" r="1.2" fill="#c6c6c6"/><circle cx="5.1" cy="1.3" r="1.2" fill="#c6c6c6"/><circle cx="8.9" cy="1.3" r="1.2" fill="#c6c6c6"/></svg>
<div class="a" style="left:6px;top:659.7px;width:357px;height:61.299999999999955px;background:#fff;border:1px solid #cdeae3;border-left:none;border-bottom:2px solid #c4c4c4"></div>
<div class="a" style="left:6px;top:659.7px;width:5px;height:59.299999999999955px;background:#3bb49b"></div>
<div class="t" style="left:53.6px;top:667.9px;font-size:13.6px;line-height:13.6px;color:#333;">Validation Addresses</div>
<div class="t" style="left:245.0px;top:669.3px;font-size:14.2px;line-height:14.2px;color:#333;width:100px;text-align:right"><b>4</b> steps</div>
<svg class="a" style="left:17px;top:680.5px" width="7" height="19" viewBox="0 0 7 19"><g fill="#c4c4c4"><rect x="0" y="0.0" width="2" height="2"/><rect x="4.1" y="0.0" width="2" height="2"/><rect x="0" y="4.1" width="2" height="2"/><rect x="4.1" y="4.1" width="2" height="2"/><rect x="0" y="8.2" width="2" height="2"/><rect x="4.1" y="8.2" width="2" height="2"/><rect x="0" y="12.3" width="2" height="2"/><rect x="4.1" y="12.3" width="2" height="2"/><rect x="0" y="16.4" width="2" height="2"/><rect x="4.1" y="16.4" width="2" height="2"/></g></svg>
<div class="cb" style="left:32.5px;top:684.1px"></div>
<svg class="a" style="left:53px;top:702.3px" width="12" height="12" viewBox="0 0 12 12"><g transform="translate(6 6) rotate(-45)"><path d="M-8.2 0 L-5 -2.4 H4.2 V2.4 H-5 Z" fill="#55a9f5"/><path d="M5 -2.4 H7.2 Q8.2 -2.4 8.2 -1.4 V1.4 Q8.2 2.4 7.2 2.4 H5 Z" fill="#55a9f5"/></g></svg><div class="t" style="left:67.3px;top:701.8px;font-size:13px;line-height:13px;color:#55a9f5;font-weight:bold;">999</div>
<svg class="a" style="left:259px;top:701.4000000000001px" width="15" height="10" viewBox="0 0 15 10"><path d="M0.7 5 C2.8 1.6 5 0.6 7.5 0.6 C10 0.6 12.2 1.6 14.3 5 C12.2 8.4 10 9.4 7.5 9.4 C5 9.4 2.8 8.4 0.7 5 Z" stroke="#c6c6c6" stroke-width="1.2" fill="none"/><circle cx="7.3" cy="4.6" r="3.4" fill="#c6c6c6"/></svg><svg class="a" style="left:284.5px;top:698.4000000000001px" width="13" height="14" viewBox="0 0 13 14"><path d="M3.6 3.3 A5.3 5.3 0 1 0 9.4 3.3" stroke="#c6c6c6" stroke-width="1.8" fill="none"/><path d="M6.5 0 V6.9" stroke="#c6c6c6" stroke-width="1.8"/></svg><svg class="a" style="left:308.2px;top:699.4000000000001px" width="12" height="13" viewBox="0 0 12 13"><path d="M0 2.6 H12 M3.6 2.4 V0.8 H8.4 V2.4" stroke="#c6c6c6" stroke-width="1.2" fill="none"/><path d="M1.4 3 V12.2 H10.6 V3" stroke="#c6c6c6" stroke-width="1.3" fill="none"/><path d="M3.6 4.5 V10.3 M5.3 4.5 V10.3 M7 4.5 V10.3 M8.6 4.5 V10.3" stroke="#c6c6c6" stroke-width="0.9"/></svg><svg class="a" style="left:332.7px;top:705.0000000000001px" width="11" height="3" viewBox="0 0 11 3"><circle cx="1.3" cy="1.3" r="1.2" fill="#c6c6c6"/><circle cx="5.1" cy="1.3" r="1.2" fill="#c6c6c6"/><circle cx="8.9" cy="1.3" r="1.2" fill="#c6c6c6"/></svg>
</div>
<div class="a" style="left:369px;top:244px;width:6px;height:463px;background:#a0a0a0;border-radius:3px"></div>
<div class="a" style="left:0;top:921px;width:375px;height:41px;background:#efefef;border-top:1px solid #dcdcdc"></div>
<div class="a" style="left:131px;top:928px;width:77px;height:32.7px;background:#6ab547"></div>
<div class="a" style="left:209px;top:928px;width:35px;height:32.7px;background:#6ab547"></div>
<svg class="a" style="left:141.5px;top:937px" width="14" height="14" viewBox="0 0 14 14"><path d="M0.5 0.3 L13.5 7 L0.5 13.7 Z" fill="#fff"/></svg>
<div class="t" style="left:166.3px;top:936.7px;font-size:14px;line-height:14px;color:#fff;font-weight:bold;">RUN</div>
<svg class="a" style="left:219.5px;top:938.5px" width="14" height="13" viewBox="0 0 14 14"><g fill="#fff"><circle cx="7" cy="7" r="4.8"/><rect x="5.6" y="0" width="2.8" height="3.5" transform="rotate(0 7 7)"/><rect x="5.6" y="0" width="2.8" height="3.5" transform="rotate(45 7 7)"/><rect x="5.6" y="0" width="2.8" height="3.5" transform="rotate(90 7 7)"/><rect x="5.6" y="0" width="2.8" height="3.5" transform="rotate(135 7 7)"/><rect x="5.6" y="0" width="2.8" height="3.5" transform="rotate(180 7 7)"/><rect x="5.6" y="0" width="2.8" height="3.5" transform="rotate(225 7 7)"/><rect x="5.6" y="0" width="2.8" height="3.5" transform="rotate(270 7 7)"/><rect x="5.6" y="0" width="2.8" height="3.5" transform="rotate(315 7 7)"/></g><circle cx="7" cy="7" r="2" fill="#6ab547"/></svg>
<!-- MAIN -->
<div class="t" style="left:399px;top:120px;font-size:21px;color:#333;line-height:28px">Script output on entire dataset</div>
<div class="t" style="left:400px;top:156px;font-size:15px;color:#aaa;line-height:22px"><b>999</b> rows - <b>14</b> cols</div>
<div class="t" style="left:530.5px;top:156px;font-size:15px;color:#333;line-height:22px">(</div>
<svg class="a" style="left:537.7px;top:161.5px" width="12" height="12" viewBox="0 0 12 12"><g transform="translate(6 6) rotate(-45)"><path d="M-8.2 0 L-5 -2.4 H4.2 V2.4 H-5 Z" fill="#2f8ff0"/><path d="M5 -2.4 H7.2 Q8.2 -2.4 8.2 -1.4 V1.4 Q8.2 2.4 7.2 2.4 H5 Z" fill="#2f8ff0"/></g></svg>
<div class="t" style="left:552.5px;top:157px;font-size:13.5px;font-weight:bold;color:#2f8ff0;line-height:22px">999</div>
<div class="t" style="left:577px;top:156px;font-size:15px;color:#333;line-height:22px">)</div>
<div class="a" style="left:376px;top:183px;width:1494px;height:1px;background:#dcdcdc"></div>
<div class="a" style="left:376px;top:184px;width:1494px;height:778px;background:#efefef"></div>
<div class="a" style="left:400px;top:194px;width:65px;height:40px;border:1px solid #d6d6d6;background:#efefef"></div>
<svg class="a" style="left:407px;top:206px" width="17" height="17" viewBox="0 0 17 17">
<circle cx="7" cy="7" r="5.3" stroke="#aaa" stroke-width="2" fill="none"/><path d="M10.8 10.8 L15 15" stroke="#aaa" stroke-width="2.4"/>
</svg>
<div class="t" style="left:1700px;top:203px;width:157px;text-align:right;font-size:13.8px;font-weight:bold;color:#555;line-height:22px">999 rows</div>
<!-- display buttons -->
<div class="a" style="left:1628px;top:131px;width:95px;height:33px;border:1px solid #ccc;background:#fff"></div>
<div class="t" style="left:1639px;top:136px;font-size:13.8px;font-weight:bold;color:#333;line-height:24px">DISPLAY</div>
<svg class="a" style="left:1705px;top:144px" width="11" height="6" viewBox="0 0 11 6"><path d="M0 0 H10.5 L5.25 5.5 Z" fill="#222"/></svg>
<div class="a" style="left:1727px;top:130px;width:75px;height:33px;border:1px solid #ccc;background:#fff"></div>
<div class="a" style="left:1727px;top:130px;width:37px;height:33px;background:#c8c8c8"></div>
<svg class="a" style="left:1737px;top:139px" width="17" height="14" viewBox="0 0 17 14">
<rect x="0.8" y="0.8" width="15.4" height="12.4" rx="1.5" fill="#333"/>
<g fill="#c8c8c8"><rect x="2.8" y="4" width="3.2" height="2"/><rect x="7" y="4" width="3.2" height="2"/><rect x="11.2" y="4" width="3.2" height="2"/>
<rect x="2.8" y="7.3" width="3.2" height="2"/><rect x="7" y="7.3" width="3.2" height="2"/><rect x="11.2" y="7.3" width="3.2" height="2"/>
<rect x="2.8" y="10.3" width="3.2" height="1.3"/><rect x="7" y="10.3" width="3.2" height="1.3"/><rect x="11.2" y="10.3" width="3.2" height="1.3"/></g>
</svg>
<svg class="a" style="left:1774px;top:139px" width="17" height="14" viewBox="0 0 17 14">
<g fill="#333"><rect x="0" y="0.5" width="2.4" height="2.2"/><rect x="3.6" y="0.5" width="13.4" height="2.2"/>
<rect x="0" y="4.3" width="2.4" height="2.2"/><rect x="3.6" y="4.3" width="13.4" height="2.2"/>
<rect x="0" y="8" width="2.4" height="2.2"/><rect x="3.6" y="8" width="13.4" height="2.2"/>
<rect x="0" y="11.5" width="2.4" height="2.2"/><rect x="3.6" y="11.5" width="13.4" height="2.2"/></g>
</svg>
<div class="a" style="left:1818px;top:131px;width:40px;height:33px;border:1px solid #ccc;background:#fff"></div>
<svg class="a" style="left:1828px;top:140px" width="18" height="14" viewBox="0 0 18 14">
<rect x="0.8" y="0.8" width="16.4" height="12.4" rx="1.5" stroke="#222" stroke-width="1.6" fill="none"/>
<g fill="#222"><rect x="3.5" y="8" width="1.8" height="3.5"/><rect x="6.5" y="5" width="1.8" height="6.5"/><rect x="9.5" y="7" width="1.8" height="4.5"/><rect x="12.5" y="3.5" width="1.8" height="8"/></g>
</svg>

<div style="position:absolute;left:400px;top:241.4px;width:1468px;height:92.6px;background:#fff;border-top:1px solid #d6d6d6;box-sizing:border-box"></div>
<div class="row" style="top:345.05px;height:33.75px;background:#fff"></div>
<div class="cell" style="left:401.0px;top:344.65px;width:141.0px;height:33.75px;line-height:33.75px;font-size:14.8px;"><span style="display:inline-block;margin-left:1px;transform:scaleX(0.954);transform-origin:0 50%">1 000 006</span></div>
<div class="cell" style="left:543.0px;top:344.65px;width:123.0px;height:33.75px;line-height:33.75px;font-size:15.6px;">philippe</div>
<div class="cell" style="left:667.0px;top:344.65px;width:141.0px;height:33.75px;line-height:33.75px;font-size:14.8px;"><span style="display:inline-block;margin-left:1px;transform:scaleX(0.907);transform-origin:0 50%">ROSSET</span></div>
<div class="cell" style="left:809.0px;top:344.65px;width:367.0px;height:33.75px;line-height:33.75px;font-size:15.4px;">philippe.rosset@free.fr</div>
<div class="cell" style="left:1177.0px;top:344.65px;width:228.0px;height:33.75px;line-height:33.75px;font-size:14.8px;"><span style="display:inline-block;margin-left:1px;transform:scaleX(0.98);transform-origin:0 50%">2000-08-25T00:00:00.000Z</span></div>
<div class="cell num" style="left:1406.0px;top:344.65px;width:124.0px;height:33.75px;line-height:33.75px;font-size:14.8px;">21</div>
<div class="cell" style="left:1531.0px;top:344.65px;width:124.0px;height:33.75px;line-height:33.75px;font-size:14.8px;"><span style="display:inline-block;margin-left:1px;transform:scaleX(0.93);transform-origin:0 50%">H</span></div>
<div class="cell" style="left:1656.0px;top:344.65px;width:212.0px;height:33.75px;line-height:33.75px;font-size:15.5px;">Intermediate occupations</div>
<div class="row" style="top:378.80px;height:33.75px;background:#f3f3f3"></div>
<div class="cell" style="left:401.0px;top:378.40px;width:141.0px;height:33.75px;line-height:33.75px;font-size:14.8px;"><span style="display:inline-block;margin-left:1px;transform:scaleX(0.954);transform-origin:0 50%">1 000 999</span></div>
<div class="cell" style="left:543.0px;top:378.40px;width:123.0px;height:33.75px;line-height:33.75px;font-size:15.6px;">pierre</div>
<div class="cell" style="left:667.0px;top:378.40px;width:141.0px;height:33.75px;line-height:33.75px;font-size:14.8px;"><span style="display:inline-block;margin-left:1px;transform:scaleX(0.907);transform-origin:0 50%">BARDIN</span></div>
<div class="cell" style="left:809.0px;top:378.40px;width:367.0px;height:33.75px;line-height:33.75px;font-size:15.4px;">pierre.bardin@wanadoo.fr</div>
<div class="cell" style="left:1177.0px;top:378.40px;width:228.0px;height:33.75px;line-height:33.75px;font-size:14.8px;"><span style="display:inline-block;margin-left:1px;transform:scaleX(0.98);transform-origin:0 50%">1948-01-08T00:00:00.000Z</span></div>
<div class="cell num" style="left:1406.0px;top:378.40px;width:124.0px;height:33.75px;line-height:33.75px;font-size:14.8px;">74</div>
<div class="cell" style="left:1531.0px;top:378.40px;width:124.0px;height:33.75px;line-height:33.75px;font-size:14.8px;"><span style="display:inline-block;margin-left:1px;transform:scaleX(0.93);transform-origin:0 50%">H</span></div>
<div class="cell" style="left:1656.0px;top:378.40px;width:212.0px;height:33.75px;line-height:33.75px;font-size:15.5px;">Lower managerial and professions</div>
<div class="row" style="top:412.55px;height:33.75px;background:#fff"></div>
<div class="cell" style="left:401.0px;top:412.15px;width:141.0px;height:33.75px;line-height:33.75px;font-size:14.8px;"><span style="display:inline-block;margin-left:1px;transform:scaleX(0.954);transform-origin:0 50%">1 000 990</span></div>
<div class="cell" style="left:543.0px;top:412.15px;width:123.0px;height:33.75px;line-height:33.75px;font-size:15.6px;">lise</div>
<div class="cell" style="left:667.0px;top:412.15px;width:141.0px;height:33.75px;line-height:33.75px;font-size:14.8px;"><span style="display:inline-block;margin-left:1px;transform:scaleX(0.907);transform-origin:0 50%">GOIX</span></div>
<div class="cell" style="left:809.0px;top:412.15px;width:367.0px;height:33.75px;line-height:33.75px;font-size:15.4px;">lise.goix@clubinternet.fr</div>
<div class="cell" style="left:1177.0px;top:412.15px;width:228.0px;height:33.75px;line-height:33.75px;font-size:14.8px;"><span style="display:inline-block;margin-left:1px;transform:scaleX(0.98);transform-origin:0 50%">1958-01-09T00:00:00.000Z</span></div>
<div class="cell num" style="left:1406.0px;top:412.15px;width:124.0px;height:33.75px;line-height:33.75px;font-size:14.8px;">64</div>
<div class="cell" style="left:1531.0px;top:412.15px;width:124.0px;height:33.75px;line-height:33.75px;font-size:14.8px;"><span style="display:inline-block;margin-left:1px;transform:scaleX(0.93);transform-origin:0 50%">H</span></div>
<div class="cell" style="left:1656.0px;top:412.15px;width:212.0px;height:33.75px;line-height:33.75px;font-size:15.5px;">Intermediate occupations</div>
<div class="row" style="top:446.30px;height:33.75px;background:#f3f3f3"></div>
<div class="cell" style="left:401.0px;top:445.90px;width:141.0px;height:33.75px;line-height:33.75px;font-size:14.8px;"><span style="display:inline-block;margin-left:1px;transform:scaleX(0.954);transform-origin:0 50%">1 000 980</span></div>
<div class="cell" style="left:543.0px;top:445.90px;width:123.0px;height:33.75px;line-height:33.75px;font-size:15.6px;">jean-pierre</div>
<div class="cell" style="left:667.0px;top:445.90px;width:141.0px;height:33.75px;line-height:33.75px;font-size:14.8px;"><span style="display:inline-block;margin-left:1px;transform:scaleX(0.907);transform-origin:0 50%">CHENARD</span></div>
<div class="cell" style="left:809.0px;top:445.90px;width:367.0px;height:33.75px;line-height:33.75px;font-size:15.4px;">jean-pierre.chenard@clubinternet.fr</div>
<div class="cell" style="left:1177.0px;top:445.90px;width:228.0px;height:33.75px;line-height:33.75px;font-size:14.8px;"><span style="display:inline-block;margin-left:1px;transform:scaleX(0.98);transform-origin:0 50%">1961-02-06T00:00:00.000Z</span></div>
<div class="cell num" style="left:1406.0px;top:445.90px;width:124.0px;height:33.75px;line-height:33.75px;font-size:14.8px;">61</div>
<div class="cell" style="left:1531.0px;top:445.90px;width:124.0px;height:33.75px;line-height:33.75px;font-size:14.8px;"><span style="display:inline-block;margin-left:1px;transform:scaleX(0.93);transform-origin:0 50%">H</span></div>
<div class="cell" style="left:1656.0px;top:445.90px;width:212.0px;height:33.75px;line-height:33.75px;font-size:15.5px;">Lower managerial and professions</div>
<div class="row" style="top:480.05px;height:33.75px;background:#fff"></div>
<div class="cell" style="left:401.0px;top:479.65px;width:141.0px;height:33.75px;line-height:33.75px;font-size:14.8px;"><span style="display:inline-block;margin-left:1px;transform:scaleX(0.954);transform-origin:0 50%">1 000 969</span></div>
<div class="cell" style="left:543.0px;top:479.65px;width:123.0px;height:33.75px;line-height:33.75px;font-size:15.6px;">pierre-yves</div>
<div class="cell" style="left:667.0px;top:479.65px;width:141.0px;height:33.75px;line-height:33.75px;font-size:14.8px;"><span style="display:inline-block;margin-left:1px;transform:scaleX(0.907);transform-origin:0 50%">DURAND</span></div>
<div class="cell" style="left:809.0px;top:479.65px;width:367.0px;height:33.75px;line-height:33.75px;font-size:15.4px;">pierre-yves.durand@free.fr</div>
<div class="cell" style="left:1177.0px;top:479.65px;width:228.0px;height:33.75px;line-height:33.75px;font-size:14.8px;"><span style="display:inline-block;margin-left:1px;transform:scaleX(0.98);transform-origin:0 50%">1959-03-24T00:00:00.000Z</span></div>
<div class="cell num" style="left:1406.0px;top:479.65px;width:124.0px;height:33.75px;line-height:33.75px;font-size:14.8px;">63</div>
<div class="cell" style="left:1531.0px;top:479.65px;width:124.0px;height:33.75px;line-height:33.75px;font-size:14.8px;"><span style="display:inline-block;margin-left:1px;transform:scaleX(0.93);transform-origin:0 50%">F</span></div>
<div class="cell" style="left:1656.0px;top:479.65px;width:212.0px;height:33.75px;line-height:33.75px;font-size:15.5px;">Intermediate occupations</div>
<div class="row" style="top:513.80px;height:33.75px;background:#f3f3f3"></div>
<div class="cell" style="left:401.0px;top:513.40px;width:141.0px;height:33.75px;line-height:33.75px;font-size:14.8px;"><span style="display:inline-block;margin-left:1px;transform:scaleX(0.954);transform-origin:0 50%">1 000 959</span></div>
<div class="cell" style="left:543.0px;top:513.40px;width:123.0px;height:33.75px;line-height:33.75px;font-size:15.6px;">gilles</div>
<div class="cell" style="left:667.0px;top:513.40px;width:141.0px;height:33.75px;line-height:33.75px;font-size:14.8px;"><span style="display:inline-block;margin-left:1px;transform:scaleX(0.907);transform-origin:0 50%">BOTTE</span></div>
<div class="cell" style="left:809.0px;top:513.40px;width:367.0px;height:33.75px;line-height:33.75px;font-size:15.4px;">gilles.botte@free.fr</div>
<div class="cell" style="left:1177.0px;top:513.40px;width:228.0px;height:33.75px;line-height:33.75px;font-size:14.8px;"><span style="display:inline-block;margin-left:1px;transform:scaleX(0.98);transform-origin:0 50%">1985-07-03T00:00:00.000Z</span></div>
<div class="cell num" style="left:1406.0px;top:513.40px;width:124.0px;height:33.75px;line-height:33.75px;font-size:14.8px;">37</div>
<div class="a" style="left:1531px;top:513.80px;width:124px;height:33.75px;background:#e4e4e4"></div>
<div class="cell" style="left:1531.0px;top:513.40px;width:124.0px;height:33.75px;line-height:33.75px;font-size:14.8px;"><span style="display:inline-block;margin-left:1px;transform:scaleX(0.93);transform-origin:0 50%"></span></div>
<div class="cell" style="left:1656.0px;top:513.40px;width:212.0px;height:33.75px;line-height:33.75px;font-size:15.5px;">Higher managerial and professions</div>
<div class="row" style="top:547.55px;height:33.75px;background:#fff"></div>
<div class="cell" style="left:401.0px;top:547.15px;width:141.0px;height:33.75px;line-height:33.75px;font-size:14.8px;"><span style="display:inline-block;margin-left:1px;transform:scaleX(0.954);transform-origin:0 50%">1 000 948</span></div>
<div class="cell" style="left:543.0px;top:547.15px;width:123.0px;height:33.75px;line-height:33.75px;font-size:15.6px;">marie-carmen</div>
<div class="cell" style="left:667.0px;top:547.15px;width:141.0px;height:33.75px;line-height:33.75px;font-size:14.8px;"><span style="display:inline-block;margin-left:1px;transform:scaleX(0.907);transform-origin:0 50%">GOUDARD</span></div>
<div class="cell" style="left:809.0px;top:547.15px;width:367.0px;height:33.75px;line-height:33.75px;font-size:15.4px;">marie-carmen_goudard@alice.fr</div>
<div class="cell" style="left:1177.0px;top:547.15px;width:228.0px;height:33.75px;line-height:33.75px;font-size:14.8px;"><span style="display:inline-block;margin-left:1px;transform:scaleX(0.98);transform-origin:0 50%">1980-02-18T00:00:00.000Z</span></div>
<div class="cell num" style="left:1406.0px;top:547.15px;width:124.0px;height:33.75px;line-height:33.75px;font-size:14.8px;">42</div>
<div class="cell" style="left:1531.0px;top:547.15px;width:124.0px;height:33.75px;line-height:33.75px;font-size:14.8px;"><span style="display:inline-block;margin-left:1px;transform:scaleX(0.93);transform-origin:0 50%">F</span></div>
<div class="cell" style="left:1656.0px;top:547.15px;width:212.0px;height:33.75px;line-height:33.75px;font-size:15.5px;">Intermediate occupations</div>
<div class="row" style="top:581.30px;height:33.75px;background:#f3f3f3"></div>
<div class="cell" style="left:401.0px;top:580.90px;width:141.0px;height:33.75px;line-height:33.75px;font-size:14.8px;"><span style="display:inline-block;margin-left:1px;transform:scaleX(0.954);transform-origin:0 50%">1 000 937</span></div>
<div class="cell" style="left:543.0px;top:580.90px;width:123.0px;height:33.75px;line-height:33.75px;font-size:15.6px;">laurence</div>
<div class="cell" style="left:667.0px;top:580.90px;width:141.0px;height:33.75px;line-height:33.75px;font-size:14.8px;"><span style="display:inline-block;margin-left:1px;transform:scaleX(0.907);transform-origin:0 50%">TREBUCQ</span></div>
<div class="cell" style="left:809.0px;top:580.90px;width:367.0px;height:33.75px;line-height:33.75px;font-size:15.4px;">laurence.trebucq@free.fr</div>
<div class="cell" style="left:1177.0px;top:580.90px;width:228.0px;height:33.75px;line-height:33.75px;font-size:14.8px;"><span style="display:inline-block;margin-left:1px;transform:scaleX(0.98);transform-origin:0 50%">1974-01-11T00:00:00.000Z</span></div>
<div class="cell num" style="left:1406.0px;top:580.90px;width:124.0px;height:33.75px;line-height:33.75px;font-size:14.8px;">48</div>
<div class="cell" style="left:1531.0px;top:580.90px;width:124.0px;height:33.75px;line-height:33.75px;font-size:14.8px;"><span style="display:inline-block;margin-left:1px;transform:scaleX(0.93);transform-origin:0 50%">H</span></div>
<div class="cell" style="left:1656.0px;top:580.90px;width:212.0px;height:33.75px;line-height:33.75px;font-size:15.5px;">Higher managerial and professions</div>
<div class="row" style="top:615.05px;height:33.75px;background:#fff"></div>
<div class="cell" style="left:401.0px;top:614.65px;width:141.0px;height:33.75px;line-height:33.75px;font-size:14.8px;"><span style="display:inline-block;margin-left:1px;transform:scaleX(0.954);transform-origin:0 50%">1 000 929</span></div>
<div class="cell" style="left:543.0px;top:614.65px;width:123.0px;height:33.75px;line-height:33.75px;font-size:15.6px;">philippe</div>
<div class="cell" style="left:667.0px;top:614.65px;width:141.0px;height:33.75px;line-height:33.75px;font-size:14.8px;"><span style="display:inline-block;margin-left:1px;transform:scaleX(0.907);transform-origin:0 50%">ALBERTELLI</span></div>
<div class="cell" style="left:809.0px;top:614.65px;width:367.0px;height:33.75px;line-height:33.75px;font-size:15.4px;">philippe.albertelli@wanadoo.fr</div>
<div class="cell" style="left:1177.0px;top:614.65px;width:228.0px;height:33.75px;line-height:33.75px;font-size:14.8px;"><span style="display:inline-block;margin-left:1px;transform:scaleX(0.98);transform-origin:0 50%">1963-05-21T00:00:00.000Z</span></div>
<div class="cell num" style="left:1406.0px;top:614.65px;width:124.0px;height:33.75px;line-height:33.75px;font-size:14.8px;">59</div>
<div class="cell" style="left:1531.0px;top:614.65px;width:124.0px;height:33.75px;line-height:33.75px;font-size:14.8px;"><span style="display:inline-block;margin-left:1px;transform:scaleX(0.93);transform-origin:0 50%">H</span></div>
<div class="cell" style="left:1656.0px;top:614.65px;width:212.0px;height:33.75px;line-height:33.75px;font-size:15.5px;">Intermediate occupations</div>
<div class="row" style="top:648.80px;height:33.75px;background:#f3f3f3"></div>
<div class="cell" style="left:401.0px;top:648.40px;width:141.0px;height:33.75px;line-height:33.75px;font-size:14.8px;"><span style="display:inline-block;margin-left:1px;transform:scaleX(0.954);transform-origin:0 50%">1 000 916</span></div>
<div class="cell" style="left:543.0px;top:648.40px;width:123.0px;height:33.75px;line-height:33.75px;font-size:15.6px;">gilles</div>
<div class="cell" style="left:667.0px;top:648.40px;width:141.0px;height:33.75px;line-height:33.75px;font-size:14.8px;"><span style="display:inline-block;margin-left:1px;transform:scaleX(0.907);transform-origin:0 50%">GENIS</span></div>
<div class="cell" style="left:809.0px;top:648.40px;width:367.0px;height:33.75px;line-height:33.75px;font-size:15.4px;">gilles.genis@free.fr</div>
<div class="cell" style="left:1177.0px;top:648.40px;width:228.0px;height:33.75px;line-height:33.75px;font-size:14.8px;"><span style="display:inline-block;margin-left:1px;transform:scaleX(0.98);transform-origin:0 50%">1953-02-17T00:00:00.000Z</span></div>
<div class="cell num" style="left:1406.0px;top:648.40px;width:124.0px;height:33.75px;line-height:33.75px;font-size:14.8px;">69</div>
<div class="cell" style="left:1531.0px;top:648.40px;width:124.0px;height:33.75px;line-height:33.75px;font-size:14.8px;"><span style="display:inline-block;margin-left:1px;transform:scaleX(0.93);transform-origin:0 50%">F</span></div>
<div class="cell" style="left:1656.0px;top:648.40px;width:212.0px;height:33.75px;line-height:33.75px;font-size:15.5px;">Intermediate occupations</div>
<div class="row" style="top:682.55px;height:33.75px;background:#fff"></div>
<div class="cell" style="left:401.0px;top:682.15px;width:141.0px;height:33.75px;line-height:33.75px;font-size:14.8px;"><span style="display:inline-block;margin-left:1px;transform:scaleX(0.954);transform-origin:0 50%">1 000 906</span></div>
<div class="cell" style="left:543.0px;top:682.15px;width:123.0px;height:33.75px;line-height:33.75px;font-size:15.6px;">pierre</div>
<div class="cell" style="left:667.0px;top:682.15px;width:141.0px;height:33.75px;line-height:33.75px;font-size:14.8px;"><span style="display:inline-block;margin-left:1px;transform:scaleX(0.907);transform-origin:0 50%">PROST</span></div>
<div class="cell" style="left:809.0px;top:682.15px;width:367.0px;height:33.75px;line-height:33.75px;font-size:15.4px;">pierre_prost@alice.fr</div>
<div class="cell" style="left:1177.0px;top:682.15px;width:228.0px;height:33.75px;line-height:33.75px;font-size:14.8px;"><span style="display:inline-block;margin-left:1px;transform:scaleX(0.98);transform-origin:0 50%">1971-04-27T00:00:00.000Z</span></div>
<div class="cell num" style="left:1406.0px;top:682.15px;width:124.0px;height:33.75px;line-height:33.75px;font-size:14.8px;">51</div>
<div class="cell" style="left:1531.0px;top:682.15px;width:124.0px;height:33.75px;line-height:33.75px;font-size:14.8px;"><span style="display:inline-block;margin-left:1px;transform:scaleX(0.93);transform-origin:0 50%">F</span></div>
<div class="cell" style="left:1656.0px;top:682.15px;width:212.0px;height:33.75px;line-height:33.75px;font-size:15.5px;">Intermediate occupations</div>
<div class="row" style="top:716.30px;height:33.75px;background:#f3f3f3"></div>
<div class="cell" style="left:401.0px;top:715.90px;width:141.0px;height:33.75px;line-height:33.75px;font-size:14.8px;"><span style="display:inline-block;margin-left:1px;transform:scaleX(0.954);transform-origin:0 50%">1 000 894</span></div>
<div class="cell" style="left:543.0px;top:715.90px;width:123.0px;height:33.75px;line-height:33.75px;font-size:15.6px;">patrick</div>
<div class="cell" style="left:667.0px;top:715.90px;width:141.0px;height:33.75px;line-height:33.75px;font-size:14.8px;"><span style="display:inline-block;margin-left:1px;transform:scaleX(0.907);transform-origin:0 50%">SALON</span></div>
<div class="cell" style="left:809.0px;top:715.90px;width:367.0px;height:33.75px;line-height:33.75px;font-size:15.4px;">patrick.salon@free.fr</div>
<div class="cell" style="left:1177.0px;top:715.90px;width:228.0px;height:33.75px;line-height:33.75px;font-size:14.8px;"><span style="display:inline-block;margin-left:1px;transform:scaleX(0.98);transform-origin:0 50%">1964-06-08T00:00:00.000Z</span></div>
<div class="cell num" style="left:1406.0px;top:715.90px;width:124.0px;height:33.75px;line-height:33.75px;font-size:14.8px;">58</div>
<div class="cell" style="left:1531.0px;top:715.90px;width:124.0px;height:33.75px;line-height:33.75px;font-size:14.8px;"><span style="display:inline-block;margin-left:1px;transform:scaleX(0.93);transform-origin:0 50%">F</span></div>
<div class="cell" style="left:1656.0px;top:715.90px;width:212.0px;height:33.75px;line-height:33.75px;font-size:15.5px;">Lower managerial and professions</div>
<div class="row" style="top:750.05px;height:33.75px;background:#fff"></div>
<div class="cell" style="left:401.0px;top:749.65px;width:141.0px;height:33.75px;line-height:33.75px;font-size:14.8px;"><span style="display:inline-block;margin-left:1px;transform:scaleX(0.954);transform-origin:0 50%">1 000 883</span></div>
<div class="cell" style="left:543.0px;top:749.65px;width:123.0px;height:33.75px;line-height:33.75px;font-size:15.6px;">bernard</div>
<div class="cell" style="left:667.0px;top:749.65px;width:141.0px;height:33.75px;line-height:33.75px;font-size:14.8px;"><span style="display:inline-block;margin-left:1px;transform:scaleX(0.907);transform-origin:0 50%">BOYETTE</span></div>
<div class="cell" style="left:809.0px;top:749.65px;width:367.0px;height:33.75px;line-height:33.75px;font-size:15.4px;">bernard.boyette@neuf.fr</div>
<div class="cell" style="left:1177.0px;top:749.65px;width:228.0px;height:33.75px;line-height:33.75px;font-size:14.8px;"><span style="display:inline-block;margin-left:1px;transform:scaleX(0.98);transform-origin:0 50%">1967-11-25T00:00:00.000Z</span></div>
<div class="cell num" style="left:1406.0px;top:749.65px;width:124.0px;height:33.75px;line-height:33.75px;font-size:14.8px;">54</div>
<div class="cell" style="left:1531.0px;top:749.65px;width:124.0px;height:33.75px;line-height:33.75px;font-size:14.8px;"><span style="display:inline-block;margin-left:1px;transform:scaleX(0.93);transform-origin:0 50%">F</span></div>
<div class="cell" style="left:1656.0px;top:749.65px;width:212.0px;height:33.75px;line-height:33.75px;font-size:15.5px;">Small employers and own account</div>
<div class="row" style="top:783.80px;height:33.75px;background:#f3f3f3"></div>
<div class="cell" style="left:401.0px;top:783.40px;width:141.0px;height:33.75px;line-height:33.75px;font-size:14.8px;"><span style="display:inline-block;margin-left:1px;transform:scaleX(0.954);transform-origin:0 50%">1 000 873</span></div>
<div class="cell" style="left:543.0px;top:783.40px;width:123.0px;height:33.75px;line-height:33.75px;font-size:15.6px;">alex</div>
<div class="cell" style="left:667.0px;top:783.40px;width:141.0px;height:33.75px;line-height:33.75px;font-size:14.8px;"><span style="display:inline-block;margin-left:1px;transform:scaleX(0.907);transform-origin:0 50%">LAGUERIE</span></div>
<div class="cell" style="left:809.0px;top:783.40px;width:367.0px;height:33.75px;line-height:33.75px;font-size:15.4px;">alex.laguerie@free.fr</div>
<div class="cell" style="left:1177.0px;top:783.40px;width:228.0px;height:33.75px;line-height:33.75px;font-size:14.8px;"><span style="display:inline-block;margin-left:1px;transform:scaleX(0.98);transform-origin:0 50%">1953-02-23T00:00:00.000Z</span></div>
<div class="cell num" style="left:1406.0px;top:783.40px;width:124.0px;height:33.75px;line-height:33.75px;font-size:14.8px;">69</div>
<div class="cell" style="left:1531.0px;top:783.40px;width:124.0px;height:33.75px;line-height:33.75px;font-size:14.8px;"><span style="display:inline-block;margin-left:1px;transform:scaleX(0.93);transform-origin:0 50%">H</span></div>
<div class="cell" style="left:1656.0px;top:783.40px;width:212.0px;height:33.75px;line-height:33.75px;font-size:15.5px;">Intermediate occupations</div>
<div class="row" style="top:817.55px;height:33.75px;background:#fff"></div>
<div class="cell" style="left:401.0px;top:817.15px;width:141.0px;height:33.75px;line-height:33.75px;font-size:14.8px;"><span style="display:inline-block;margin-left:1px;transform:scaleX(0.954);transform-origin:0 50%">1 000 865</span></div>
<div class="cell" style="left:543.0px;top:817.15px;width:123.0px;height:33.75px;line-height:33.75px;font-size:15.6px;">jean-claude</div>
<div class="cell" style="left:667.0px;top:817.15px;width:141.0px;height:33.75px;line-height:33.75px;font-size:14.8px;"><span style="display:inline-block;margin-left:1px;transform:scaleX(0.907);transform-origin:0 50%">HOCHART</span></div>
<div class="a" style="left:809px;top:817.55px;width:367px;height:33.75px;background:#efefef"></div>
<div class="cell" style="left:809.0px;top:817.15px;width:367.0px;height:33.75px;line-height:33.75px;font-size:15.4px;"></div>
<div class="cell" style="left:1177.0px;top:817.15px;width:228.0px;height:33.75px;line-height:33.75px;font-size:14.8px;"><span style="display:inline-block;margin-left:1px;transform:scaleX(0.98);transform-origin:0 50%">1967-11-13T00:00:00.000Z</span></div>
<div class="cell num" style="left:1406.0px;top:817.15px;width:124.0px;height:33.75px;line-height:33.75px;font-size:14.8px;">54</div>
<div class="cell" style="left:1531.0px;top:817.15px;width:124.0px;height:33.75px;line-height:33.75px;font-size:14.8px;"><span style="display:inline-block;margin-left:1px;transform:scaleX(0.93);transform-origin:0 50%">F</span></div>
<div class="cell" style="left:1656.0px;top:817.15px;width:212.0px;height:33.75px;line-height:33.75px;font-size:15.5px;">Intermediate occupations</div>
<div class="row" style="top:851.30px;height:33.75px;background:#f3f3f3"></div>
<div class="cell" style="left:401.0px;top:850.90px;width:141.0px;height:33.75px;line-height:33.75px;font-size:14.8px;"><span style="display:inline-block;margin-left:1px;transform:scaleX(0.954);transform-origin:0 50%">1 000 855</span></div>
<div class="cell" style="left:543.0px;top:850.90px;width:123.0px;height:33.75px;line-height:33.75px;font-size:15.6px;">marcel</div>
<div class="cell" style="left:667.0px;top:850.90px;width:141.0px;height:33.75px;line-height:33.75px;font-size:14.8px;"><span style="display:inline-block;margin-left:1px;transform:scaleX(0.907);transform-origin:0 50%">CORON</span></div>
<div class="cell" style="left:809.0px;top:850.90px;width:367.0px;height:33.75px;line-height:33.75px;font-size:15.4px;">marcel.coron@free.fr</div>
<div class="cell" style="left:1177.0px;top:850.90px;width:228.0px;height:33.75px;line-height:33.75px;font-size:14.8px;"><span style="display:inline-block;margin-left:1px;transform:scaleX(0.98);transform-origin:0 50%">1974-05-03T00:00:00.000Z</span></div>
<div class="cell num" style="left:1406.0px;top:850.90px;width:124.0px;height:33.75px;line-height:33.75px;font-size:14.8px;">48</div>
<div class="cell" style="left:1531.0px;top:850.90px;width:124.0px;height:33.75px;line-height:33.75px;font-size:14.8px;"><span style="display:inline-block;margin-left:1px;transform:scaleX(0.93);transform-origin:0 50%">F</span></div>
<div class="cell" style="left:1656.0px;top:850.90px;width:212.0px;height:33.75px;line-height:33.75px;font-size:15.5px;">Small employers and own account</div>
<div class="row" style="top:885.05px;height:33.75px;background:#fff"></div>
<div class="cell" style="left:401.0px;top:884.65px;width:141.0px;height:33.75px;line-height:33.75px;font-size:14.8px;"><span style="display:inline-block;margin-left:1px;transform:scaleX(0.954);transform-origin:0 50%">1 000 847</span></div>
<div class="cell" style="left:543.0px;top:884.65px;width:123.0px;height:33.75px;line-height:33.75px;font-size:15.6px;">michel</div>
<div class="cell" style="left:667.0px;top:884.65px;width:141.0px;height:33.75px;line-height:33.75px;font-size:14.8px;"><span style="display:inline-block;margin-left:1px;transform:scaleX(0.907);transform-origin:0 50%">PEREIRA</span></div>
<div class="cell" style="left:809.0px;top:884.65px;width:367.0px;height:33.75px;line-height:33.75px;font-size:15.4px;">michel.pereira@clubinternet.fr</div>
<div class="cell" style="left:1177.0px;top:884.65px;width:228.0px;height:33.75px;line-height:33.75px;font-size:14.8px;"><span style="display:inline-block;margin-left:1px;transform:scaleX(0.98);transform-origin:0 50%">1970-04-24T00:00:00.000Z</span></div>
<div class="cell num" style="left:1406.0px;top:884.65px;width:124.0px;height:33.75px;line-height:33.75px;font-size:14.8px;">52</div>
<div class="a" style="left:1531px;top:885.05px;width:124px;height:33.75px;background:#efefef"></div>
<div class="cell" style="left:1531.0px;top:884.65px;width:124.0px;height:33.75px;line-height:33.75px;font-size:14.8px;"><span style="display:inline-block;margin-left:1px;transform:scaleX(0.93);transform-origin:0 50%"></span></div>
<div class="cell" style="left:1656.0px;top:884.65px;width:212.0px;height:33.75px;line-height:33.75px;font-size:15.5px;">Small employers and own account</div>
<div class="row" style="top:918.80px;height:33.75px;background:#f3f3f3"></div>
<div class="cell" style="left:401.0px;top:918.40px;width:141.0px;height:33.75px;line-height:33.75px;font-size:14.8px;"><span style="display:inline-block;margin-left:1px;transform:scaleX(0.954);transform-origin:0 50%">1 000 834</span></div>
<div class="cell" style="left:543.0px;top:918.40px;width:123.0px;height:33.75px;line-height:33.75px;font-size:15.6px;">philippe</div>
<div class="cell" style="left:667.0px;top:918.40px;width:141.0px;height:33.75px;line-height:33.75px;font-size:14.8px;"><span style="display:inline-block;margin-left:1px;transform:scaleX(0.907);transform-origin:0 50%">LUCAS</span></div>
<div class="cell" style="left:809.0px;top:918.40px;width:367.0px;height:33.75px;line-height:33.75px;font-size:15.4px;">philippe.lucas@wanadoo.fr</div>
<div class="cell" style="left:1177.0px;top:918.40px;width:228.0px;height:33.75px;line-height:33.75px;font-size:14.8px;"><span style="display:inline-block;margin-left:1px;transform:scaleX(0.98);transform-origin:0 50%">1963-10-11T00:00:00.000Z</span></div>
<div class="cell num" style="left:1406.0px;top:918.40px;width:124.0px;height:33.75px;line-height:33.75px;font-size:14.8px;">58</div>
<div class="cell" style="left:1531.0px;top:918.40px;width:124.0px;height:33.75px;line-height:33.75px;font-size:14.8px;"><span style="display:inline-block;margin-left:1px;transform:scaleX(0.93);transform-origin:0 50%">F</span></div>
<div class="cell" style="left:1656.0px;top:918.40px;width:212.0px;height:33.75px;line-height:33.75px;font-size:15.5px;">Small employers and own account</div>
<div class="row" style="top:952.55px;height:33.75px;background:#fff"></div>
<div class="cell" style="left:401.0px;top:952.15px;width:141.0px;height:33.75px;line-height:33.75px;font-size:14.8px;"><span style="display:inline-block;margin-left:1px;transform:scaleX(0.954);transform-origin:0 50%"></span></div>
<div class="cell" style="left:543.0px;top:952.15px;width:123.0px;height:33.75px;line-height:33.75px;font-size:15.6px;"></div>
<div class="cell" style="left:667.0px;top:952.15px;width:141.0px;height:33.75px;line-height:33.75px;font-size:14.8px;"><span style="display:inline-block;margin-left:1px;transform:scaleX(0.907);transform-origin:0 50%"></span></div>
<div class="cell" style="left:809.0px;top:952.15px;width:367.0px;height:33.75px;line-height:33.75px;font-size:15.4px;"></div>
<div class="cell" style="left:1177.0px;top:952.15px;width:228.0px;height:33.75px;line-height:33.75px;font-size:14.8px;"><span style="display:inline-block;margin-left:1px;transform:scaleX(0.98);transform-origin:0 50%"></span></div>
<div class="cell num" style="left:1406.0px;top:952.15px;width:124.0px;height:33.75px;line-height:33.75px;font-size:14.8px;"></div>
<div class="cell" style="left:1531.0px;top:952.15px;width:124.0px;height:33.75px;line-height:33.75px;font-size:14.8px;"><span style="display:inline-block;margin-left:1px;transform:scaleX(0.93);transform-origin:0 50%"></span></div>
<div class="cell" style="left:1656.0px;top:952.15px;width:212.0px;height:33.75px;line-height:33.75px;font-size:15.5px;"></div>
<div style="position:absolute;left:542px;top:241.4px;width:1px;height:720.6px;background:rgba(0,0,0,0.09)"></div>
<div style="position:absolute;left:666px;top:241.4px;width:1px;height:720.6px;background:rgba(0,0,0,0.09)"></div>
<div style="position:absolute;left:808px;top:241.4px;width:1px;height:720.6px;background:rgba(0,0,0,0.09)"></div>
<div style="position:absolute;left:1176px;top:241.4px;width:1px;height:720.6px;background:rgba(0,0,0,0.09)"></div>
<div style="position:absolute;left:1405px;top:241.4px;width:1px;height:720.6px;background:rgba(0,0,0,0.09)"></div>
<div style="position:absolute;left:1530px;top:241.4px;width:1px;height:720.6px;background:rgba(0,0,0,0.09)"></div>
<div style="position:absolute;left:1655px;top:241.4px;width:1px;height:720.6px;background:rgba(0,0,0,0.09)"></div>
<div class="hname" style="left:400.0px;top:242.0px;">Client_Id</div>
<svg class="a" style="left:405.1px;top:253.7px" width="7" height="19" viewBox="0 0 7 19"><g fill="#cacaca"><rect x="0" y="0.0" width="2" height="2"/><rect x="4.1" y="0.0" width="2" height="2"/><rect x="0" y="4.1" width="2" height="2"/><rect x="4.1" y="4.1" width="2" height="2"/><rect x="0" y="8.2" width="2" height="2"/><rect x="4.1" y="8.2" width="2" height="2"/><rect x="0" y="12.3" width="2" height="2"/><rect x="4.1" y="12.3" width="2" height="2"/><rect x="0" y="16.4" width="2" height="2"/><rect x="4.1" y="16.4" width="2" height="2"/></g></svg>
<div class="htype" style="left:407.0px;top:291.5px;">string</div>
<div class="hmean" style="left:407.0px;top:315px;">Decimal (comma)</div>
<div style="position:absolute;left:400.0px;top:334px;width:141.0px;height:13.6px;background:#6cbe7b"></div>
<div class="hname" style="left:542.0px;top:242.0px;">First_Name</div>
<svg class="a" style="left:547.1px;top:253.7px" width="7" height="19" viewBox="0 0 7 19"><g fill="#cacaca"><rect x="0" y="0.0" width="2" height="2"/><rect x="4.1" y="0.0" width="2" height="2"/><rect x="0" y="4.1" width="2" height="2"/><rect x="4.1" y="4.1" width="2" height="2"/><rect x="0" y="8.2" width="2" height="2"/><rect x="4.1" y="8.2" width="2" height="2"/><rect x="0" y="12.3" width="2" height="2"/><rect x="4.1" y="12.3" width="2" height="2"/><rect x="0" y="16.4" width="2" height="2"/><rect x="4.1" y="16.4" width="2" height="2"/></g></svg>
<div class="htype" style="left:549.0px;top:291.5px;">string</div>
<div class="hmean" style="left:549.0px;top:315px;">Text</div>
<div style="position:absolute;left:543.0px;top:334px;width:114.0px;height:13.6px;background:#6cbe7b"></div>
<div style="position:absolute;left:657.0px;top:334px;width:9.0px;height:13.6px;background:#d9d9d9"></div>
<div class="hname" style="left:666.0px;top:242.0px;">Last_Name</div>
<svg class="a" style="left:671.1px;top:253.7px" width="7" height="19" viewBox="0 0 7 19"><g fill="#cacaca"><rect x="0" y="0.0" width="2" height="2"/><rect x="4.1" y="0.0" width="2" height="2"/><rect x="0" y="4.1" width="2" height="2"/><rect x="4.1" y="4.1" width="2" height="2"/><rect x="0" y="8.2" width="2" height="2"/><rect x="4.1" y="8.2" width="2" height="2"/><rect x="0" y="12.3" width="2" height="2"/><rect x="4.1" y="12.3" width="2" height="2"/><rect x="0" y="16.4" width="2" height="2"/><rect x="4.1" y="16.4" width="2" height="2"/></g></svg>
<div class="htype" style="left:673.0px;top:291.5px;">string</div>
<div class="hmean" style="left:673.0px;top:315px;">Text</div>
<div style="position:absolute;left:667.0px;top:334px;width:140.0px;height:13.6px;background:#6cbe7b"></div>
<div class="hname" style="left:808.0px;top:242.0px;">Email</div>
<svg class="a" style="left:813.1px;top:253.7px" width="7" height="19" viewBox="0 0 7 19"><g fill="#cacaca"><rect x="0" y="0.0" width="2" height="2"/><rect x="4.1" y="0.0" width="2" height="2"/><rect x="0" y="4.1" width="2" height="2"/><rect x="4.1" y="4.1" width="2" height="2"/><rect x="0" y="8.2" width="2" height="2"/><rect x="4.1" y="8.2" width="2" height="2"/><rect x="0" y="12.3" width="2" height="2"/><rect x="4.1" y="12.3" width="2" height="2"/><rect x="0" y="16.4" width="2" height="2"/><rect x="4.1" y="16.4" width="2" height="2"/></g></svg>
<div class="htype" style="left:815.0px;top:291.5px;">string</div>
<div class="hmean" style="left:815.0px;top:315px;">E-mail address</div>
<div style="position:absolute;left:809.0px;top:334px;width:294.0px;height:13.6px;background:#6cbe7b"></div>
<div style="position:absolute;left:1103.0px;top:334px;width:73.0px;height:13.6px;background:#d9d9d9"></div>
<div class="hname" style="left:1176.0px;top:242.0px;">Birth_Date</div>
<svg class="a" style="left:1181.1px;top:253.7px" width="7" height="19" viewBox="0 0 7 19"><g fill="#cacaca"><rect x="0" y="0.0" width="2" height="2"/><rect x="4.1" y="0.0" width="2" height="2"/><rect x="0" y="4.1" width="2" height="2"/><rect x="4.1" y="4.1" width="2" height="2"/><rect x="0" y="8.2" width="2" height="2"/><rect x="4.1" y="8.2" width="2" height="2"/><rect x="0" y="12.3" width="2" height="2"/><rect x="4.1" y="12.3" width="2" height="2"/><rect x="0" y="16.4" width="2" height="2"/><rect x="4.1" y="16.4" width="2" height="2"/></g></svg>
<div class="htype" style="left:1183.0px;top:291.5px;">string</div>
<div class="hmean" style="left:1183.0px;top:315px;">Date</div>
<div style="position:absolute;left:1177.0px;top:334px;width:217.0px;height:13.6px;background:#6cbe7b"></div>
<div style="position:absolute;left:1394.0px;top:334px;width:11.0px;height:13.6px;background:#d9d9d9"></div>
<div class="hname" style="left:1405.0px;top:242.0px;">Age</div>
<svg class="a" style="left:1410.1px;top:253.7px" width="7" height="19" viewBox="0 0 7 19"><g fill="#cacaca"><rect x="0" y="0.0" width="2" height="2"/><rect x="4.1" y="0.0" width="2" height="2"/><rect x="0" y="4.1" width="2" height="2"/><rect x="4.1" y="4.1" width="2" height="2"/><rect x="0" y="8.2" width="2" height="2"/><rect x="4.1" y="8.2" width="2" height="2"/><rect x="0" y="12.3" width="2" height="2"/><rect x="4.1" y="12.3" width="2" height="2"/><rect x="0" y="16.4" width="2" height="2"/><rect x="4.1" y="16.4" width="2" height="2"/></g></svg>
<div class="htype" style="left:1412.0px;top:291.5px;">bigint</div>
<div class="hmean" style="left:1412.0px;top:315px;">Integer</div>
<div style="position:absolute;left:1406.0px;top:334px;width:118.0px;height:13.6px;background:#6cbe7b"></div>
<div style="position:absolute;left:1524.0px;top:334px;width:6.0px;height:13.6px;background:#d9d9d9"></div>
<div class="hname" style="left:1530.0px;top:242.0px;">Gender</div>
<svg class="a" style="left:1535.1px;top:253.7px" width="7" height="19" viewBox="0 0 7 19"><g fill="#cacaca"><rect x="0" y="0.0" width="2" height="2"/><rect x="4.1" y="0.0" width="2" height="2"/><rect x="0" y="4.1" width="2" height="2"/><rect x="4.1" y="4.1" width="2" height="2"/><rect x="0" y="8.2" width="2" height="2"/><rect x="4.1" y="8.2" width="2" height="2"/><rect x="0" y="12.3" width="2" height="2"/><rect x="4.1" y="12.3" width="2" height="2"/><rect x="0" y="16.4" width="2" height="2"/><rect x="4.1" y="16.4" width="2" height="2"/></g></svg>
<div class="htype" style="left:1537.0px;top:291.5px;">string</div>
<div class="hmean" style="left:1537.0px;top:315px;">Gender</div>
<div style="position:absolute;left:1531.0px;top:334px;width:118.0px;height:13.6px;background:#6cbe7b"></div>
<div style="position:absolute;left:1649.0px;top:334px;width:6.0px;height:13.6px;background:#d9d9d9"></div>
<div class="hname" style="left:1655.0px;top:242.0px;">SPCategory</div>
<svg class="a" style="left:1660.1px;top:253.7px" width="7" height="19" viewBox="0 0 7 19"><g fill="#cacaca"><rect x="0" y="0.0" width="2" height="2"/><rect x="4.1" y="0.0" width="2" height="2"/><rect x="0" y="4.1" width="2" height="2"/><rect x="4.1" y="4.1" width="2" height="2"/><rect x="0" y="8.2" width="2" height="2"/><rect x="4.1" y="8.2" width="2" height="2"/><rect x="0" y="12.3" width="2" height="2"/><rect x="4.1" y="12.3" width="2" height="2"/><rect x="0" y="16.4" width="2" height="2"/><rect x="4.1" y="16.4" width="2" height="2"/></g></svg>
<div class="htype" style="left:1662.0px;top:291.5px;">string</div>
<div class="hmean" style="left:1662.0px;top:315px;">Natural lang.</div>
<div style="position:absolute;left:1656.0px;top:334px;width:212.0px;height:13.6px;background:#6cbe7b"></div>
<div style="position:absolute;left:1868px;top:241.4px;width:1px;height:720.6px;background:#d6d6d6"></div>
<div class="a" style="left:1380px;top:953px;width:488px;height:9px;background:linear-gradient(to bottom,rgba(0,0,0,0),rgba(0,0,0,0.13));border-radius:9px 0 0 0"></div>
<div class="a" style="left:1862px;top:348px;width:6px;height:12px;background:#a0a0a0;border-radius:0 0 3px 3px"></div>
<div style="position:absolute;left:400.0px;top:241.4px;width:1px;height:720.6px;background:#d6d6d6"></div>
<div class="a" style="left:375px;top:334px;width:19px;height:125px;background:#c8c8c8;border-radius:0 10px 10px 0"></div>
<div class="a" style="left:381px;top:359px;width:1px;height:75px;background:#f4f4f4"></div>
<div class="a" style="left:386px;top:359px;width:1px;height:75px;background:#f4f4f4"></div>


</body></html>
